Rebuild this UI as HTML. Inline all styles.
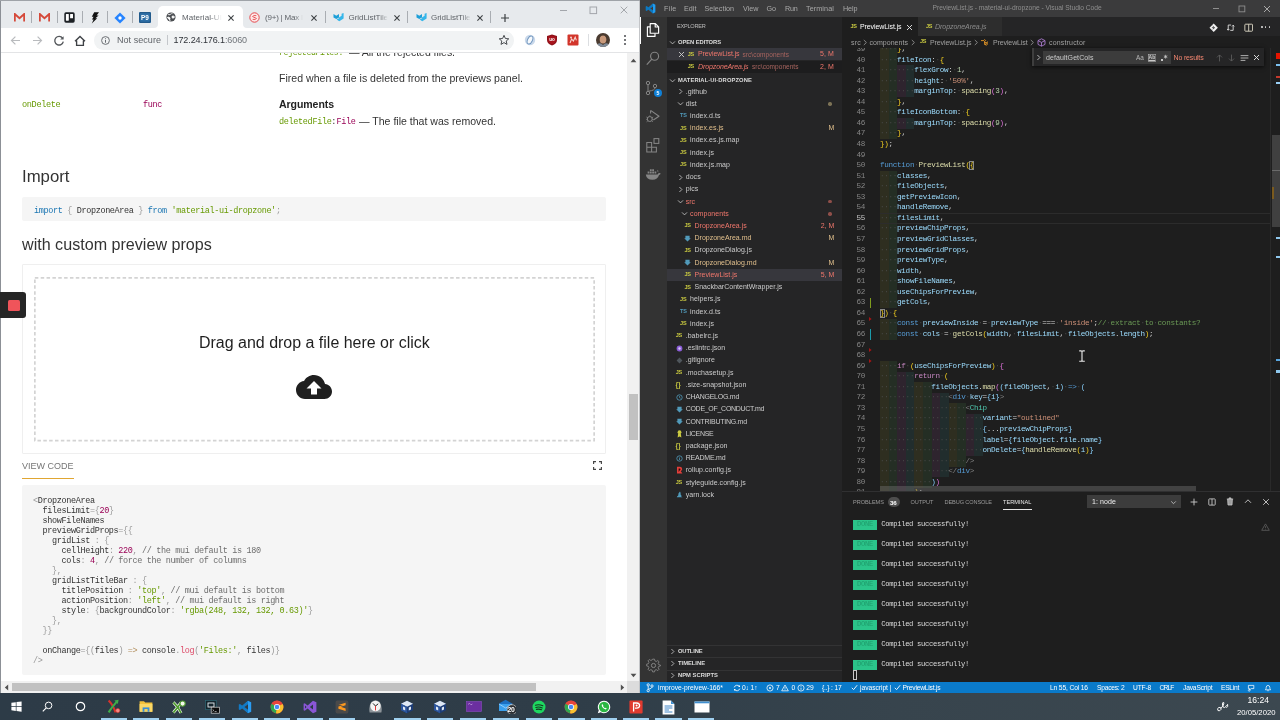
<!DOCTYPE html>
<html lang="en"><head><meta charset="utf-8"><title>screen</title>
<style>html,body{margin:0;padding:0;background:#1e1e1e;}
#r{will-change:transform;position:relative;width:1280px;height:720px;overflow:hidden;font-family:"Liberation Sans",sans-serif;}
#r div,#r svg{position:absolute;}
#r .t{white-space:pre;font-family:"Liberation Sans",sans-serif;}
#r .m{font-family:"Liberation Mono",monospace;}
#r .t span{position:static;}
</style></head>
<body><div id="r">
<div style="left:0px;top:0px;width:640px;height:693px;background:#ffffff;"></div>
<div style="left:0px;top:0px;width:640px;height:28px;background:#e7eaed;"></div>
<div style="left:0px;top:0px;width:640px;height:1px;background:#9fa3a8;"></div>
<svg style="position:absolute;left:13.5px;top:13px;" width="11" height="9" viewBox="0 0 11 9"><path d="M0.8 8.6V1 L5.5 5.2 L10.2 1V8.6" fill="none" stroke="#d5493a" stroke-width="1.9" stroke-linejoin="miter"/></svg>
<svg style="position:absolute;left:38.5px;top:13px;" width="11" height="9" viewBox="0 0 11 9"><path d="M0.8 8.6V1 L5.5 5.2 L10.2 1V8.6" fill="none" stroke="#d5493a" stroke-width="1.9" stroke-linejoin="miter"/></svg>
<div style="left:31px;top:11px;width:1px;height:12px;background:#a9adb2;"></div>
<div style="left:56.5px;top:11px;width:1px;height:12px;background:#a9adb2;"></div>
<div style="left:82px;top:11px;width:1px;height:12px;background:#a9adb2;"></div>
<div style="left:107px;top:11px;width:1px;height:12px;background:#a9adb2;"></div>
<div style="left:132px;top:11px;width:1px;height:12px;background:#a9adb2;"></div>
<svg style="position:absolute;left:64px;top:12px;" width="11" height="11" viewBox="0 0 11 11"><rect x="0.3" y="0.3" width="10.4" height="10.4" rx="1.6" fill="#1d2125"/><rect x="1.9" y="1.9" width="2.9" height="6.8" rx=".4" fill="#fff"/><rect x="6.1" y="1.9" width="2.9" height="4.4" rx=".4" fill="#fff"/></svg>
<svg style="position:absolute;left:90px;top:11.5px;" width="10" height="12" viewBox="0 0 10 12"><path d="M4.2 0.3 L9 0.3 L6.6 3.6 L8.6 3.6 L5.4 6.2 L7.2 6.2 L1.8 11.6 L3.6 7.6 L2 7.6 L3.6 4.8 L1.8 4.8 Z" fill="#111"/></svg>
<svg style="position:absolute;left:113.5px;top:11.5px;" width="12" height="12" viewBox="0 0 12 12"><path d="M6 0.4 L11.6 6 L6 11.6 L0.4 6Z" fill="#2684ff"/><circle cx="6" cy="6" r="1.7" fill="#fff"/></svg>
<svg style="position:absolute;left:139px;top:12px;" width="12" height="11" viewBox="0 0 12 11"><rect x="0" y="0" width="12" height="11" rx="1" fill="#2f6fa6"/><rect x="0.7" y="0.7" width="10.6" height="9.6" rx=".6" fill="none" stroke="#1d4f7c" stroke-width=".8"/></svg>
<div class="t" style="left:141px;top:12.60px;line-height:10px;height:10px;font-size:6.40px;font-weight:bold;color:#fff;">P9</div>
<div style="left:158px;top:6px;width:85px;height:22px;background:#ffffff;border-radius:5px 5px 0 0;"></div>
<svg style="position:absolute;left:154px;top:24px;" width="4" height="4" viewBox="0 0 4 4"><path d="M4 0 V4 H0 A4 4 0 0 0 4 0Z" fill="#fff"/></svg>
<svg style="position:absolute;left:243px;top:24px;" width="4" height="4" viewBox="0 0 4 4"><path d="M0 0 V4 H4 A4 4 0 0 1 0 0Z" fill="#fff"/></svg>
<svg style="position:absolute;left:165.5px;top:12px;" width="10" height="10" viewBox="0 0 10 10"><circle cx="5" cy="5" r="4.6" fill="#4a4d51"/><path d="M2 2.6 Q3.5 3.2 4.6 2.2 Q5.4 1.4 6.6 1.6 M1 5.6 Q2.4 4.6 3.8 5.6 Q4.4 6.6 3.8 7.6 L4.2 9 M6.2 4 Q7.6 3.6 8.6 4.8 Q8 6.4 6.6 6.2 Q5.6 5.4 6.2 4Z" fill="#fff" stroke="#fff" stroke-width=".7"/></svg>
<div class="t" style="left:182px;top:11.50px;line-height:12px;height:12px;font-size:8.00px;letter-spacing:0.080px;color:#5f6368;-webkit-mask-image:linear-gradient(90deg,#000 70%,transparent);mask-image:linear-gradient(90deg,#000 70%,transparent);">Material-UI</div>
<svg style="position:absolute;left:227px;top:13.5px;" width="8" height="8" viewBox="0 0 8 8"><path d="M1.4 1.4L6.6 6.6M6.6 1.4L1.4 6.6" stroke="#3c4043" stroke-width="1.1" fill="none"/></svg>
<svg style="position:absolute;left:249px;top:12px;" width="11" height="11" viewBox="0 0 11 11"><circle cx="5.5" cy="5.5" r="4.7" fill="#fde8e8" stroke="#e5484d" stroke-width="1"/><path d="M7.3 3.6 H4.6 L3.6 4.6 L7.4 6.4 L6.4 7.4 H3.7" fill="none" stroke="#e5484d" stroke-width=".9"/></svg>
<div class="t" style="left:265px;top:11.50px;line-height:12px;height:12px;font-size:8.00px;letter-spacing:-0.211px;color:#5f6368;-webkit-mask-image:linear-gradient(90deg,#000 78%,transparent);mask-image:linear-gradient(90deg,#000 78%,transparent);">(9+) | Max I</div>
<svg style="position:absolute;left:310px;top:13.5px;" width="8" height="8" viewBox="0 0 8 8"><path d="M1.4 1.4L6.6 6.6M6.6 1.4L1.4 6.6" stroke="#3c4043" stroke-width="1.1" fill="none"/></svg>
<div style="left:325px;top:11px;width:1px;height:12px;background:#a9adb2;"></div>
<svg style="position:absolute;left:333px;top:13px;" width="11" height="9" viewBox="0 0 11 9"><path d="M0.5 1 L3.3 2.7 L6 1 V4.4 L3.3 6 L0.5 4.4Z" fill="#1e9fd8"/><path d="M6 4.4 L8.6 2.8 V0.8 L10.6 0 V5.6 L6.3 8.2 L3.6 6.6 L6 5.2Z" fill="#35b6ea"/></svg>
<div class="t" style="left:348.5px;top:11.50px;line-height:12px;height:12px;font-size:8.00px;letter-spacing:-0.055px;color:#5f6368;-webkit-mask-image:linear-gradient(90deg,#000 78%,transparent);mask-image:linear-gradient(90deg,#000 78%,transparent);">GridListTile</div>
<svg style="position:absolute;left:393px;top:13.5px;" width="8" height="8" viewBox="0 0 8 8"><path d="M1.4 1.4L6.6 6.6M6.6 1.4L1.4 6.6" stroke="#3c4043" stroke-width="1.1" fill="none"/></svg>
<div style="left:407px;top:11px;width:1px;height:12px;background:#a9adb2;"></div>
<svg style="position:absolute;left:416px;top:13px;" width="11" height="9" viewBox="0 0 11 9"><path d="M0.5 1 L3.3 2.7 L6 1 V4.4 L3.3 6 L0.5 4.4Z" fill="#1e9fd8"/><path d="M6 4.4 L8.6 2.8 V0.8 L10.6 0 V5.6 L6.3 8.2 L3.6 6.6 L6 5.2Z" fill="#35b6ea"/></svg>
<div class="t" style="left:431px;top:11.50px;line-height:12px;height:12px;font-size:8.00px;letter-spacing:-0.055px;color:#5f6368;-webkit-mask-image:linear-gradient(90deg,#000 78%,transparent);mask-image:linear-gradient(90deg,#000 78%,transparent);">GridListTile</div>
<svg style="position:absolute;left:476px;top:13.5px;" width="8" height="8" viewBox="0 0 8 8"><path d="M1.4 1.4L6.6 6.6M6.6 1.4L1.4 6.6" stroke="#3c4043" stroke-width="1.1" fill="none"/></svg>
<div style="left:490px;top:11px;width:1px;height:12px;background:#a9adb2;"></div>
<svg style="position:absolute;left:500px;top:12.5px;" width="10" height="10" viewBox="0 0 10 10"><path d="M5 1V9M1 5H9" stroke="#3c4043" stroke-width="1.2"/></svg>
<div style="left:559.5px;top:10px;width:7px;height:1px;background:#a3a6ab;"></div>
<svg style="position:absolute;left:589px;top:6px;" width="9" height="9" viewBox="0 0 9 9"><rect x="1" y="1" width="6.6" height="6.6" fill="none" stroke="#a3a6ab" stroke-width="1"/></svg>
<svg style="position:absolute;left:620px;top:6px;" width="8" height="8" viewBox="0 0 8 8"><path d="M0.7000000000000002 0.7000000000000002L7.3 7.3M7.3 0.7000000000000002L0.7000000000000002 7.3" stroke="#a3a6ab" stroke-width="1" fill="none"/></svg>
<div style="left:0px;top:28px;width:640px;height:24.5px;background:#ffffff;"></div>
<div style="left:0px;top:52px;width:640px;height:1px;background:#e3e4e6;"></div>
<svg style="position:absolute;left:10px;top:35px;" width="11" height="11" viewBox="0 0 11 11"><path d="M10 5.5H1.6M5.4 1.6L1.5 5.5L5.4 9.4" fill="none" stroke="#b9bbbe" stroke-width="1.2"/></svg>
<svg style="position:absolute;left:31.5px;top:35px;" width="11" height="11" viewBox="0 0 11 11"><path d="M1 5.5H9.4M5.6 1.6L9.5 5.5L5.6 9.4" fill="none" stroke="#b9bbbe" stroke-width="1.2"/></svg>
<svg style="position:absolute;left:52.5px;top:34.5px;" width="12" height="12" viewBox="0 0 12 12"><path d="M9.6 3.2 A4.3 4.3 0 1 0 10.3 6.6" fill="none" stroke="#55585c" stroke-width="1.35"/><path d="M10.6 1.2V4.6H7.2Z" fill="#55585c"/></svg>
<svg style="position:absolute;left:73.5px;top:34.5px;" width="12" height="12" viewBox="0 0 12 12"><path d="M1 6.2 L6 1.4 L11 6.2 M2.6 5.4V10.4H9.4V5.4" fill="none" stroke="#3f4246" stroke-width="1.35"/></svg>
<div style="left:94px;top:31px;width:420px;height:18.6px;background:#f1f3f4;border-radius:9.3px;"></div>
<svg style="position:absolute;left:100.5px;top:35.5px;" width="9" height="9" viewBox="0 0 9 9"><circle cx="4.5" cy="4.5" r="3.9" fill="none" stroke="#5f6368" stroke-width=".9"/><path d="M4.5 4V6.7M4.5 2.3V3.2" stroke="#5f6368" stroke-width=".95"/></svg>
<div class="t" style="left:117px;top:33.50px;line-height:13px;height:13px;font-size:9.00px;letter-spacing:0.048px;color:#5f6368;">Not secure</div>
<div style="left:167px;top:35px;width:1px;height:10px;background:#c4c7cb;"></div>
<div class="t" style="left:173.5px;top:33.50px;line-height:13px;height:13px;font-size:9.00px;letter-spacing:-0.093px;color:#30343a;">172.24.176.1<span style="color:#70757a">:6060</span></div>
<svg style="position:absolute;left:498px;top:34px;" width="12" height="12" viewBox="0 0 12 12"><path d="M6 1.3 L7.4 4.5 L10.8 4.8 L8.2 7 L9 10.4 L6 8.6 L3 10.4 L3.8 7 L1.2 4.8 L4.6 4.5Z" fill="none" stroke="#4a4d51" stroke-width="1"/></svg>
<svg style="position:absolute;left:524px;top:34px;" width="12" height="12" viewBox="0 0 12 12"><circle cx="6" cy="6" r="5.2" fill="#c9d8ea"/><ellipse cx="6" cy="6" rx="2.4" ry="4.2" transform="rotate(25 6 6)" fill="#f6f9fc" stroke="#6d93bd" stroke-width=".9"/></svg>
<svg style="position:absolute;left:546px;top:34px;" width="12" height="12" viewBox="0 0 12 12"><path d="M6 0.6 L11 2 V6 Q11 9.6 6 11.5 Q1 9.6 1 6 V2Z" fill="#8e1219"/><path d="M6 1.8 L10 2.9 V6 Q10 8.7 6 10.3 Q2 8.7 2 6 V2.9Z" fill="#a8141d"/></svg>
<div class="t" style="left:549.3px;top:36.20px;line-height:8px;height:8px;font-size:4.60px;font-weight:bold;color:#fff;">uo</div>
<svg style="position:absolute;left:567px;top:34px;" width="12" height="12" viewBox="0 0 12 12"><rect x="0.5" y="0.5" width="11" height="11" rx="1" fill="#d2352b"/><path d="M3 9 L4.6 5 L6.4 7 L8.2 3.2 L9.4 6.4" fill="none" stroke="#f6d4cf" stroke-width="1.1"/><circle cx="4" cy="3.4" r="1" fill="#f6d4cf"/></svg>
<div style="left:588px;top:34px;width:1px;height:12px;background:#dcdee1;"></div>
<div style="left:596px;top:33px;width:14px;height:14px;border-radius:50%;overflow:hidden;"><svg style="left:0;top:0" width="14" height="14" viewBox="0 0 14 14"><rect width="14" height="14" fill="#4a3b30"/><ellipse cx="7" cy="6.4" rx="3.3" ry="4" fill="#c99a7c"/><path d="M3 4.6 Q7 0.4 11 4.6 Q9.6 2.4 7 2.6 Q4.4 2.4 3 4.6Z" fill="#2a1e17"/><path d="M0 14 Q1 9.6 5 10.4 L7 12 L9 10.4 Q13 9.6 14 14Z" fill="#7f8b99"/></svg></div>
<div style="left:624.2px;top:35.4px;width:1.9px;height:1.9px;background:#4a4d51;border-radius:50%;"></div>
<div style="left:624.2px;top:39.1px;width:1.9px;height:1.9px;background:#4a4d51;border-radius:50%;"></div>
<div style="left:624.2px;top:42.8px;width:1.9px;height:1.9px;background:#4a4d51;border-radius:50%;"></div>
<div style="left:0px;top:1px;width:1px;height:692px;background:#8c9096;"></div>
<div style="left:0;top:53px;width:625px;height:20px;overflow:hidden"><div class="t m" style="left:279px;top:-6.00px;line-height:12px;height:12px;font-size:8.16px;color:#690;letter-spacing:-0.327px;">rejectedFiles:</div><div class="t" style="left:349px;top:-7.90px;line-height:15px;height:15px;font-size:10.55px;letter-spacing:-0.052px;color:#333;">— All the rejected files.</div></div>
<div class="t" style="left:279px;top:70.50px;line-height:15px;height:15px;font-size:10.55px;letter-spacing:0.012px;color:#333;">Fired when a file is deleted from the previews panel.</div>
<div class="t m" style="left:22px;top:98.50px;line-height:12px;height:12px;font-size:8.59px;color:#690;letter-spacing:-0.345px;">onDelete</div>
<div class="t m" style="left:143px;top:98.50px;line-height:12px;height:12px;font-size:8.48px;color:#905;letter-spacing:-0.340px;">func</div>
<div class="t" style="left:279px;top:96.50px;line-height:15px;height:15px;font-size:10.55px;font-weight:bold;letter-spacing:-0.076px;color:#222;">Arguments</div>
<div class="t m" style="left:279px;top:115.50px;line-height:12px;height:12px;font-size:8.52px;color:#690;letter-spacing:-0.342px;">deletedFile</div>
<div class="t m" style="left:331.3px;top:115.50px;line-height:12px;height:12px;font-size:8.52px;color:#333;letter-spacing:-0.342px;">:</div>
<div class="t m" style="left:336.5px;top:115.50px;line-height:12px;height:12px;font-size:8.48px;color:#905;letter-spacing:-0.340px;">File</div>
<div class="t" style="left:359px;top:113.50px;line-height:15px;height:15px;font-size:10.55px;color:#333;">— The file that was removed.</div>
<div class="t" style="left:22px;top:166.00px;line-height:22px;height:22px;font-size:16.76px;color:#333;">Import</div>
<div style="left:22px;top:197px;width:584px;height:24px;background:#f5f5f5;border-radius:2px;"></div>
<div class="t m" style="left:34px;top:204.50px;line-height:12px;height:12px;font-size:8.48px;color:#333;letter-spacing:-0.340px;"><span style="color:#1673b1">import</span><span style="color:#999"> {</span><span style="color:#333"> DropzoneArea </span><span style="color:#999">}</span><span style="color:#1673b1"> from</span><span style="color:#690"> 'material-ui-dropzone'</span><span style="color:#999">;</span></div>
<div class="t" style="left:22px;top:233.50px;line-height:21px;height:21px;font-size:16.13px;color:#333;">with custom preview props</div>
<div style="left:22px;top:264px;width:584px;height:189.5px;border:1px solid #efefef;border-radius:1px;box-sizing:border-box;"></div>
<svg style="position:absolute;left:33px;top:276px;" width="563" height="166.5" viewBox="0 0 563 166.5"><rect x="1.85" y="1.85" width="559.3" height="162.8" fill="none" stroke="#d3d3d3" stroke-width="1.7" stroke-dasharray="3.5 2.35"/></svg>
<div class="t" style="left:199px;top:331.50px;line-height:21px;height:21px;font-size:15.98px;color:#1f1f1f;">Drag and drop a file here or click</div>
<svg style="position:absolute;left:296px;top:369px;" width="36" height="36" viewBox="0 0 24 24"><path d="M19.35 10.04C18.67 6.59 15.64 4 12 4 9.11 4 6.6 5.64 5.35 8.04 2.34 8.36 0 10.91 0 14c0 3.31 2.69 6 6 6h13c2.76 0 5-2.24 5-5 0-2.64-2.05-4.78-4.65-4.96zM14 13v4h-4v-4H7l5-5 5 5h-3z" fill="#1f1f1f"/></svg>
<div style="left:0px;top:292px;width:26px;height:26px;background:#262626;border-radius:0 3px 3px 0;"></div>
<div style="left:8px;top:299.5px;width:11.5px;height:11.5px;background:#f0545a;border-radius:1.5px;"></div>
<div class="t" style="left:22px;top:459.50px;line-height:13px;height:13px;font-size:9.00px;color:#767676;">VIEW CODE</div>
<div style="left:22px;top:477.6px;width:51.5px;height:1.6px;background:#e0a632;"></div>
<svg style="position:absolute;left:592.5px;top:460.5px;" width="9" height="9" viewBox="0 0 9 9"><path d="M0.6 3V0.6H3M6 0.6H8.4V3M8.4 6V8.4H6M3 8.4H0.6V6" fill="none" stroke="#444" stroke-width="1.15"/></svg>
<div style="left:22px;top:485px;width:584px;height:190px;background:#f5f5f5;border-radius:2px;"></div>
<div class="t m" style="left:33px;top:495.20px;line-height:12px;height:12px;font-size:8.48px;color:#333;letter-spacing:-0.340px;"><span style="color:#999">&lt;</span><span style="color:#333">DropzoneArea</span></div>
<div class="t m" style="left:33px;top:505.20px;line-height:12px;height:12px;font-size:8.48px;color:#333;letter-spacing:-0.340px;"><span style="color:#333">  filesLimit</span><span style="color:#999">={</span><span style="color:#905">20</span><span style="color:#999">}</span></div>
<div class="t m" style="left:33px;top:515.20px;line-height:12px;height:12px;font-size:8.48px;color:#333;letter-spacing:-0.340px;"><span style="color:#333">  showFileNames</span></div>
<div class="t m" style="left:33px;top:525.20px;line-height:12px;height:12px;font-size:8.48px;color:#333;letter-spacing:-0.340px;"><span style="color:#333">  previewGridProps</span><span style="color:#999">={{</span></div>
<div class="t m" style="left:33px;top:535.20px;line-height:12px;height:12px;font-size:8.48px;color:#333;letter-spacing:-0.340px;"><span style="color:#333">    gridList </span><span style="color:#999">: {</span></div>
<div class="t m" style="left:33px;top:545.20px;line-height:12px;height:12px;font-size:8.48px;color:#333;letter-spacing:-0.340px;"><span style="color:#333">      cellHeight</span><span style="color:#999">:</span><span style="color:#905"> 220</span><span style="color:#999">,</span><span style="color:#6d6d6d"> // the mui default is 180</span></div>
<div class="t m" style="left:33px;top:555.20px;line-height:12px;height:12px;font-size:8.48px;color:#333;letter-spacing:-0.340px;"><span style="color:#333">      cols</span><span style="color:#999">:</span><span style="color:#905"> 4</span><span style="color:#999">,</span><span style="color:#6d6d6d"> // force the number of columns</span></div>
<div class="t m" style="left:33px;top:565.20px;line-height:12px;height:12px;font-size:8.48px;color:#333;letter-spacing:-0.340px;"><span style="color:#999">    },</span></div>
<div class="t m" style="left:33px;top:575.20px;line-height:12px;height:12px;font-size:8.48px;color:#333;letter-spacing:-0.340px;"><span style="color:#333">    gridListTitleBar </span><span style="color:#999">: {</span></div>
<div class="t m" style="left:33px;top:585.20px;line-height:12px;height:12px;font-size:8.48px;color:#333;letter-spacing:-0.340px;"><span style="color:#333">      titlePosition </span><span style="color:#999">:</span><span style="color:#690"> 'top'</span><span style="color:#999">,</span><span style="color:#6d6d6d"> // mui default is bottom</span></div>
<div class="t m" style="left:33px;top:595.20px;line-height:12px;height:12px;font-size:8.48px;color:#333;letter-spacing:-0.340px;"><span style="color:#333">      actionPosition</span><span style="color:#999">:</span><span style="color:#690"> 'left'</span><span style="color:#999">,</span><span style="color:#6d6d6d"> // mui default is right</span></div>
<div class="t m" style="left:33px;top:605.20px;line-height:12px;height:12px;font-size:8.48px;color:#333;letter-spacing:-0.340px;"><span style="color:#333">      style</span><span style="color:#999">: {</span><span style="color:#333">backgroundColor</span><span style="color:#999">:</span><span style="color:#690"> 'rgba(248, 132, 132, 0.63)'</span><span style="color:#999">}</span></div>
<div class="t m" style="left:33px;top:615.20px;line-height:12px;height:12px;font-size:8.48px;color:#333;letter-spacing:-0.340px;"><span style="color:#999">    },</span></div>
<div class="t m" style="left:33px;top:625.20px;line-height:12px;height:12px;font-size:8.48px;color:#333;letter-spacing:-0.340px;"><span style="color:#999">  }}</span></div>
<div class="t m" style="left:33px;top:645.20px;line-height:12px;height:12px;font-size:8.48px;color:#333;letter-spacing:-0.340px;"><span style="color:#333">  onChange</span><span style="color:#999">={(</span><span style="color:#333">files</span><span style="color:#999">)</span><span style="color:#b3905f"> =&gt;</span><span style="color:#333"> console</span><span style="color:#999">.</span><span style="color:#dd4a68">log</span><span style="color:#999">(</span><span style="color:#690">'Files:'</span><span style="color:#999">,</span><span style="color:#333"> files</span><span style="color:#999">)}</span></div>
<div class="t m" style="left:33px;top:655.20px;line-height:12px;height:12px;font-size:8.48px;color:#333;letter-spacing:-0.340px;"><span style="color:#999">/&gt;</span></div>
<div style="left:627px;top:53px;width:11.5px;height:628.3px;background:#f1f1f1;"></div>
<div style="left:638.6px;top:1px;width:1.4px;height:692px;background:#c3c5c8;"></div>
<div style="left:628.8px;top:394px;width:9px;height:46px;background:#c1c1c1;"></div>
<svg style="position:absolute;left:629.5px;top:58px;" width="7" height="5" viewBox="0 0 7 5"><path d="M3.5 0.8L6.4 4.2H0.6Z" fill="#505050"/></svg>
<svg style="position:absolute;left:629.5px;top:673px;" width="7" height="5" viewBox="0 0 7 5"><path d="M3.5 4.2L6.4 0.8H0.6Z" fill="#505050"/></svg>
<div style="left:1px;top:681.3px;width:626px;height:11.7px;background:#f1f1f1;"></div>
<div style="left:627px;top:681.3px;width:11.5px;height:11.7px;background:#dcdcdc;"></div>
<div style="left:12px;top:683px;width:524px;height:8.4px;background:#c1c1c1;"></div>
<svg style="position:absolute;left:3.5px;top:683.7px;" width="5" height="7" viewBox="0 0 5 7"><path d="M0.8 3.5L4.2 0.6V6.4Z" fill="#505050"/></svg>
<svg style="position:absolute;left:619.5px;top:683.7px;" width="5" height="7" viewBox="0 0 5 7"><path d="M4.2 3.5L0.8 0.6V6.4Z" fill="#505050"/></svg>
<div style="left:640px;top:0px;width:640px;height:16.6px;background:#3b3b3c;"></div>
<svg style="position:absolute;left:644.5px;top:3px;" width="11" height="11" viewBox="0 0 11 11"><path d="M8 0.6L10.4 1.7V9.3L8 10.4L2.6 5.5Z" fill="#1f9cf0"/><path d="M8 0.6L3.6 4.6L1.7 3.1L0.7 3.6V7.4L1.7 7.9L3.6 6.4L8 10.4V7.4L5.4 5.5L8 3.6Z" fill="#0b78c2"/><path d="M8 3.4V7.6L5.2 5.5Z" fill="#3b3b3c"/></svg>
<div class="t" style="left:664px;top:3.10px;line-height:11px;height:11px;font-size:7.20px;letter-spacing:0.224px;color:#a9a9a9;">File</div>
<div class="t" style="left:684px;top:3.10px;line-height:11px;height:11px;font-size:7.20px;letter-spacing:0.023px;color:#a9a9a9;">Edit</div>
<div class="t" style="left:704.5px;top:3.10px;line-height:11px;height:11px;font-size:7.20px;letter-spacing:-0.013px;color:#a9a9a9;">Selection</div>
<div class="t" style="left:743px;top:3.10px;line-height:11px;height:11px;font-size:7.20px;letter-spacing:0.006px;color:#a9a9a9;">View</div>
<div class="t" style="left:766.5px;top:3.10px;line-height:11px;height:11px;font-size:7.20px;letter-spacing:-0.052px;color:#a9a9a9;">Go</div>
<div class="t" style="left:785px;top:3.10px;line-height:11px;height:11px;font-size:7.20px;letter-spacing:-0.236px;color:#a9a9a9;">Run</div>
<div class="t" style="left:806px;top:3.10px;line-height:11px;height:11px;font-size:7.20px;letter-spacing:0.099px;color:#a9a9a9;">Terminal</div>
<div class="t" style="left:843px;top:3.10px;line-height:11px;height:11px;font-size:7.20px;letter-spacing:-0.077px;color:#a9a9a9;">Help</div>
<div class="t" style="left:932.5px;top:3.40px;line-height:10px;height:10px;font-size:6.70px;letter-spacing:-0.029px;color:#8f8f8f;">PreviewList.js - material-ui-dropzone - Visual Studio Code</div>
<div style="left:1212.5px;top:8.2px;width:6.5px;height:0.9px;background:#8e8e8e;"></div>
<svg style="position:absolute;left:1237.5px;top:4.5px;" width="8" height="8" viewBox="0 0 8 8"><rect x="1" y="1" width="5.8" height="5.8" fill="none" stroke="#8e8e8e" stroke-width=".9"/></svg>
<svg style="position:absolute;left:1263px;top:4.5px;" width="8" height="8" viewBox="0 0 8 8"><path d="M1 1L7 7M7 1L1 7" stroke="#b4b4b4" stroke-width=".9"/></svg>
<div style="left:640px;top:16.5px;width:27px;height:666px;background:#333333;"></div>
<div style="left:640px;top:17px;width:1.4px;height:26.5px;background:#ffffff;"></div>
<svg style="position:absolute;left:645px;top:22px;" width="16" height="16" viewBox="0 0 16 16"><path d="M5.2 1.6H10.4L13.6 4.8V11.2H5.2Z M10.2 1.6V5H13.6" fill="none" stroke="#fff" stroke-width="1.15" stroke-linejoin="round"/><path d="M5.2 4.8H2.4V14.4H10V11.4" fill="none" stroke="#fff" stroke-width="1.15" stroke-linejoin="round"/></svg>
<svg style="position:absolute;left:645px;top:50px;" width="16" height="16" viewBox="0 0 16 16"><circle cx="9.6" cy="6.2" r="4" fill="none" stroke="#858585" stroke-width="1.15"/><path d="M6.8 9.2L1.8 14.6" stroke="#858585" stroke-width="1.25"/></svg>
<svg style="position:absolute;left:644px;top:80px;" width="16" height="17" viewBox="0 0 16 17"><circle cx="4" cy="3" r="1.7" fill="none" stroke="#858585" stroke-width="1"/><circle cx="4" cy="13" r="1.7" fill="none" stroke="#858585" stroke-width="1"/><circle cx="11" cy="6" r="1.7" fill="none" stroke="#858585" stroke-width="1"/><path d="M4 4.8V11.2M11 7.8Q11 10.4 4.6 11.2" fill="none" stroke="#858585" stroke-width="1"/></svg>
<div style="left:653.8px;top:88.6px;width:8.4px;height:8.4px;background:#0f80d7;border-radius:50%;"></div>
<div class="t" style="left:656.6px;top:88.90px;line-height:8px;height:8px;font-size:5.20px;font-weight:bold;color:#fff;">5</div>
<svg style="position:absolute;left:645px;top:108px;" width="16" height="16" viewBox="0 0 16 16"><path d="M5.6 2.4V5.6M5.6 2.4L14 8.2L8.4 12" fill="none" stroke="#858585" stroke-width="1.1" stroke-linejoin="round"/><circle cx="4.8" cy="11" r="2.5" fill="none" stroke="#858585" stroke-width="1"/><path d="M1.4 9L3 10M1.2 11.4H2.4M1.6 13.8L3 12.6M8.2 9L6.6 10M8.4 11.4H7.2M8 13.8L6.6 12.6M4.8 8.4V7.4" stroke="#858585" stroke-width=".8"/></svg>
<svg style="position:absolute;left:645px;top:137px;" width="16" height="16" viewBox="0 0 16 16"><path d="M1.8 5.4H6.6V10.2H11.4V15H1.8ZM6.6 10.2H1.8M6.6 10.2V15" fill="none" stroke="#858585" stroke-width="1.05"/><rect x="9" y="1.6" width="4.8" height="4.8" fill="none" stroke="#858585" stroke-width="1.05"/></svg>
<svg style="position:absolute;left:644.5px;top:168px;" width="17" height="13" viewBox="0 0 17 13"><path d="M0.8 6.4H12.6Q13.4 4.6 15.6 5.2Q15.4 6.6 14 7Q12.8 11.6 7.4 11.8Q1.6 11.8 0.8 6.4Z" fill="#858585"/><path d="M2.6 3.6H4.4V5.4H2.6ZM4.9 3.6H6.7V5.4H4.9ZM7.2 3.6H9V5.4H7.2ZM4.9 1.3H6.7V3.1H4.9ZM7.2 1.3H9V3.1H7.2ZM9.5 3.6H11.3V5.4H9.5ZM12.4 1.8Q13.8 2.6 13.2 4.4Q12 3.6 12.4 1.8Z" fill="#858585"/></svg>
<svg style="position:absolute;left:645.5px;top:657.5px;" width="15" height="15" viewBox="0 0 15 15"><circle cx="7.5" cy="7.5" r="2.1" fill="none" stroke="#858585" stroke-width="1"/><path d="M6.5 1.2H8.5L8.9 3L10.4 3.7L12 2.7L13.4 4.1L12.4 5.7L13 7.1L14.8 7.5L14.8 8.5L13 8.9L12.4 10.4L13.4 12L12 13.4L10.4 12.4L8.9 13L8.5 14.8H6.5L6.1 13L4.6 12.4L3 13.4L1.6 12L2.6 10.4L2 8.9L0.2 8.5V6.5L2 6.1L2.6 4.6L1.6 3L3 1.6L4.6 2.6L6.1 2Z" fill="none" stroke="#858585" stroke-width=".95" stroke-linejoin="round" transform="translate(0.5 0) scale(0.94)"/></svg>
<div style="left:667px;top:16.5px;width:175px;height:666px;background:#252526;"></div>
<div class="t" style="left:677px;top:21.50px;line-height:9px;height:9px;font-size:5.60px;letter-spacing:-0.250px;color:#bbbbbb;">EXPLORER</div>
<svg style="position:absolute;left:668.5px;top:39px;" width="7" height="7" viewBox="0 0 7 7"><path d="M1 2.4L3.5 4.9L6 2.4" fill="none" stroke="#c5c5c5" stroke-width=".85"/></svg>
<div class="t" style="left:678px;top:38.00px;line-height:9px;height:9px;font-size:5.80px;font-weight:bold;letter-spacing:-0.060px;color:#dddddd;">OPEN EDITORS</div>
<div style="left:667px;top:48.3px;width:175px;height:12.2px;background:#37373d;"></div>
<svg style="position:absolute;left:677.5px;top:51px;" width="7" height="7" viewBox="0 0 7 7"><path d="M1 1L6 6M6 1L1 6" stroke="#d0d0d0" stroke-width=".9"/></svg>
<div class="t" style="left:687.7px;top:49.80px;line-height:9px;height:9px;font-size:5.50px;font-weight:bold;color:#cbcb41;letter-spacing:-0.2px;">JS</div>
<div class="t" style="left:698px;top:49.40px;line-height:10px;height:10px;font-size:7.00px;letter-spacing:-0.092px;color:#f0776c;">PreviewList.js</div>
<div class="t" style="left:742.5px;top:49.60px;line-height:10px;height:10px;font-size:6.50px;letter-spacing:0.044px;color:#a9655f;">src\components</div>
<div class="t" style="left:820px;top:49.40px;line-height:10px;height:10px;font-size:7.00px;letter-spacing:0.097px;color:#f0776c;">5, M</div>
<div style="left:667px;top:60.9px;width:175px;height:11.8px;background:#1d1d1e;"></div>
<div class="t" style="left:687.7px;top:62.20px;line-height:9px;height:9px;font-size:5.50px;font-weight:bold;color:#cbcb41;letter-spacing:-0.2px;">JS</div>
<div class="t" style="left:698px;top:61.80px;line-height:10px;height:10px;font-size:7.00px;font-style:italic;letter-spacing:-0.109px;color:#f0776c;">DropzoneArea.js</div>
<div class="t" style="left:752px;top:62.00px;line-height:10px;height:10px;font-size:6.50px;letter-spacing:0.044px;color:#a9655f;">src\components</div>
<div class="t" style="left:820px;top:61.80px;line-height:10px;height:10px;font-size:7.00px;letter-spacing:0.097px;color:#f0776c;">2, M</div>
<svg style="position:absolute;left:668.5px;top:76.5px;" width="7" height="7" viewBox="0 0 7 7"><path d="M1 2.4L3.5 4.9L6 2.4" fill="none" stroke="#c5c5c5" stroke-width=".85"/></svg>
<div class="t" style="left:678px;top:75.50px;line-height:9px;height:9px;font-size:5.80px;font-weight:bold;letter-spacing:0.097px;color:#dddddd;">MATERIAL-UI-DROPZONE</div>
<svg style="position:absolute;left:676.5px;top:88.1px;" width="7" height="7" viewBox="0 0 7 7"><path d="M2.4 1L4.9 3.5L2.4 6" fill="none" stroke="#c5c5c5" stroke-width=".85"/></svg>
<div class="t" style="left:685.7px;top:86.60px;line-height:10px;height:10px;font-size:7.00px;letter-spacing:0.043px;color:#cccccc;">.github</div>
<svg style="position:absolute;left:676.5px;top:100.322px;" width="7" height="7" viewBox="0 0 7 7"><path d="M1 2.4L3.5 4.9L6 2.4" fill="none" stroke="#c5c5c5" stroke-width=".85"/></svg>
<div class="t" style="left:685.7px;top:98.82px;line-height:10px;height:10px;font-size:7.00px;letter-spacing:0.039px;color:#cccccc;">dist</div>
<div style="left:828.4px;top:102.122px;width:3.4px;height:3.4px;background:#7d7356;border-radius:50%;"></div>
<div class="t" style="left:680.1px;top:111.44px;line-height:9px;height:9px;font-size:5.50px;font-weight:bold;color:#519aba;letter-spacing:-0.2px;">TS</div>
<div class="t" style="left:690.1px;top:111.04px;line-height:10px;height:10px;font-size:7.00px;letter-spacing:0.043px;color:#cccccc;">index.d.ts</div>
<div class="t" style="left:680.1px;top:123.67px;line-height:9px;height:9px;font-size:5.50px;font-weight:bold;color:#cbcb41;letter-spacing:-0.2px;">JS</div>
<div class="t" style="left:690.1px;top:123.27px;line-height:10px;height:10px;font-size:7.00px;letter-spacing:0.043px;color:#e2c08d;">index.es.js</div>
<div class="t" style="left:828.469px;top:123.27px;line-height:10px;height:10px;font-size:7.00px;color:#e2c08d;">M</div>
<div class="t" style="left:680.1px;top:135.89px;line-height:9px;height:9px;font-size:5.50px;font-weight:bold;color:#cbcb41;letter-spacing:-0.2px;">JS</div>
<div class="t" style="left:690.1px;top:135.49px;line-height:10px;height:10px;font-size:7.00px;letter-spacing:0.046px;color:#cccccc;">index.es.js.map</div>
<div class="t" style="left:680.1px;top:148.11px;line-height:9px;height:9px;font-size:5.50px;font-weight:bold;color:#cbcb41;letter-spacing:-0.2px;">JS</div>
<div class="t" style="left:690.1px;top:147.71px;line-height:10px;height:10px;font-size:7.00px;letter-spacing:0.042px;color:#cccccc;">index.js</div>
<div class="t" style="left:680.1px;top:160.33px;line-height:9px;height:9px;font-size:5.50px;font-weight:bold;color:#cbcb41;letter-spacing:-0.2px;">JS</div>
<div class="t" style="left:690.1px;top:159.93px;line-height:10px;height:10px;font-size:7.00px;letter-spacing:0.047px;color:#cccccc;">index.js.map</div>
<svg style="position:absolute;left:676.5px;top:173.654px;" width="7" height="7" viewBox="0 0 7 7"><path d="M2.4 1L4.9 3.5L2.4 6" fill="none" stroke="#c5c5c5" stroke-width=".85"/></svg>
<div class="t" style="left:685.7px;top:172.15px;line-height:10px;height:10px;font-size:7.00px;letter-spacing:0.053px;color:#cccccc;">docs</div>
<svg style="position:absolute;left:676.5px;top:185.876px;" width="7" height="7" viewBox="0 0 7 7"><path d="M2.4 1L4.9 3.5L2.4 6" fill="none" stroke="#c5c5c5" stroke-width=".85"/></svg>
<div class="t" style="left:685.7px;top:184.38px;line-height:10px;height:10px;font-size:7.00px;letter-spacing:0.044px;color:#cccccc;">pics</div>
<svg style="position:absolute;left:676.5px;top:198.098px;" width="7" height="7" viewBox="0 0 7 7"><path d="M1 2.4L3.5 4.9L6 2.4" fill="none" stroke="#c5c5c5" stroke-width=".85"/></svg>
<div class="t" style="left:685.7px;top:196.60px;line-height:10px;height:10px;font-size:7.00px;letter-spacing:0.044px;color:#f0776c;">src</div>
<div style="left:828.4px;top:199.898px;width:3.4px;height:3.4px;background:#8f4f49;border-radius:50%;"></div>
<svg style="position:absolute;left:680.9px;top:210.32px;" width="7" height="7" viewBox="0 0 7 7"><path d="M1 2.4L3.5 4.9L6 2.4" fill="none" stroke="#c5c5c5" stroke-width=".85"/></svg>
<div class="t" style="left:690.1px;top:208.82px;line-height:10px;height:10px;font-size:7.00px;letter-spacing:0.054px;color:#f0776c;">components</div>
<div style="left:828.4px;top:212.12px;width:3.4px;height:3.4px;background:#8f4f49;border-radius:50%;"></div>
<div class="t" style="left:684.5px;top:221.44px;line-height:9px;height:9px;font-size:5.50px;font-weight:bold;color:#cbcb41;letter-spacing:-0.2px;">JS</div>
<div class="t" style="left:694.5px;top:221.04px;line-height:10px;height:10px;font-size:7.00px;letter-spacing:0.007px;color:#f0776c;">DropzoneArea.js</div>
<div class="t" style="left:820.686px;top:221.04px;line-height:10px;height:10px;font-size:7.00px;color:#f0776c;">2, M</div>
<svg style="position:absolute;left:684.3px;top:234.764px;" width="7" height="7" viewBox="0 0 7 7"><path d="M1.4 0.8H5.6V3.2H6.8L3.5 6.6L0.2 3.2H1.4Z" fill="#519aba"/></svg>
<div class="t" style="left:694.5px;top:233.26px;line-height:10px;height:10px;font-size:7.00px;letter-spacing:0.008px;color:#e2c08d;">DropzoneArea.md</div>
<div class="t" style="left:828.469px;top:233.26px;line-height:10px;height:10px;font-size:7.00px;color:#e2c08d;">M</div>
<div class="t" style="left:684.5px;top:245.89px;line-height:9px;height:9px;font-size:5.50px;font-weight:bold;color:#cbcb41;letter-spacing:-0.2px;">JS</div>
<div class="t" style="left:694.5px;top:245.49px;line-height:10px;height:10px;font-size:7.00px;letter-spacing:0.012px;color:#cccccc;">DropzoneDialog.js</div>
<svg style="position:absolute;left:684.3px;top:259.208px;" width="7" height="7" viewBox="0 0 7 7"><path d="M1.4 0.8H5.6V3.2H6.8L3.5 6.6L0.2 3.2H1.4Z" fill="#519aba"/></svg>
<div class="t" style="left:694.5px;top:257.71px;line-height:10px;height:10px;font-size:7.00px;letter-spacing:0.013px;color:#e2c08d;">DropzoneDialog.md</div>
<div class="t" style="left:828.469px;top:257.71px;line-height:10px;height:10px;font-size:7.00px;color:#e2c08d;">M</div>
<div style="left:667px;top:268.83px;width:175px;height:12.2px;background:#37373d;"></div>
<div class="t" style="left:684.5px;top:270.33px;line-height:9px;height:9px;font-size:5.50px;font-weight:bold;color:#cbcb41;letter-spacing:-0.2px;">JS</div>
<div class="t" style="left:694.5px;top:269.93px;line-height:10px;height:10px;font-size:7.00px;color:#f0776c;">PreviewList.js</div>
<div class="t" style="left:820.686px;top:269.93px;line-height:10px;height:10px;font-size:7.00px;color:#f0776c;">5, M</div>
<div class="t" style="left:684.5px;top:282.55px;line-height:9px;height:9px;font-size:5.50px;font-weight:bold;color:#cbcb41;letter-spacing:-0.2px;">JS</div>
<div class="t" style="left:694.5px;top:282.15px;line-height:10px;height:10px;font-size:7.00px;letter-spacing:0.012px;color:#cccccc;">SnackbarContentWrapper.js</div>
<div class="t" style="left:680.1px;top:294.77px;line-height:9px;height:9px;font-size:5.50px;font-weight:bold;color:#cbcb41;letter-spacing:-0.2px;">JS</div>
<div class="t" style="left:690.1px;top:294.37px;line-height:10px;height:10px;font-size:7.00px;letter-spacing:0.043px;color:#cccccc;">helpers.js</div>
<div class="t" style="left:680.1px;top:307.00px;line-height:9px;height:9px;font-size:5.50px;font-weight:bold;color:#519aba;letter-spacing:-0.2px;">TS</div>
<div class="t" style="left:690.1px;top:306.60px;line-height:10px;height:10px;font-size:7.00px;letter-spacing:0.043px;color:#cccccc;">index.d.ts</div>
<div class="t" style="left:680.1px;top:319.22px;line-height:9px;height:9px;font-size:5.50px;font-weight:bold;color:#cbcb41;letter-spacing:-0.2px;">JS</div>
<div class="t" style="left:690.1px;top:318.82px;line-height:10px;height:10px;font-size:7.00px;letter-spacing:0.042px;color:#cccccc;">index.js</div>
<div class="t" style="left:675.7px;top:331.44px;line-height:9px;height:9px;font-size:5.50px;font-weight:bold;color:#cbcb41;letter-spacing:-0.2px;">JS</div>
<div class="t" style="left:685.7px;top:331.04px;line-height:10px;height:10px;font-size:7.00px;letter-spacing:0.041px;color:#cccccc;">.babelrc.js</div>
<svg style="position:absolute;left:675.5px;top:344.762px;" width="7" height="7" viewBox="0 0 7 7"><circle cx="3.5" cy="3.5" r="2.9" fill="#8a5cd6"/><circle cx="3.5" cy="3.5" r="1.2" fill="#d8c7f5"/></svg>
<div class="t" style="left:685.7px;top:343.26px;line-height:10px;height:10px;font-size:7.00px;letter-spacing:0.040px;color:#cccccc;">.eslintrc.json</div>
<svg style="position:absolute;left:675.5px;top:356.984px;" width="7" height="7" viewBox="0 0 7 7"><path d="M3.5 0.6L6.4 3.5L3.5 6.4L0.6 3.5Z" fill="#4f565c"/></svg>
<div class="t" style="left:685.7px;top:355.48px;line-height:10px;height:10px;font-size:7.00px;letter-spacing:0.041px;color:#cccccc;">.gitignore</div>
<div class="t" style="left:675.7px;top:368.11px;line-height:9px;height:9px;font-size:5.50px;font-weight:bold;color:#cbcb41;letter-spacing:-0.2px;">JS</div>
<div class="t" style="left:685.7px;top:367.71px;line-height:10px;height:10px;font-size:7.00px;letter-spacing:0.048px;color:#cccccc;">.mochasetup.js</div>
<div class="t" style="left:675.4px;top:379.93px;line-height:10px;height:10px;font-size:6.40px;font-weight:bold;color:#cbcb41;letter-spacing:0.3px;">{}</div>
<div class="t" style="left:685.7px;top:379.93px;line-height:10px;height:10px;font-size:7.00px;letter-spacing:0.045px;color:#cccccc;">.size-snapshot.json</div>
<svg style="position:absolute;left:675.5px;top:393.65px;" width="7" height="7" viewBox="0 0 7 7"><circle cx="3.5" cy="3.5" r="2.7" fill="none" stroke="#519aba" stroke-width=".8"/><path d="M3.5 2V3.6L4.6 4.2" fill="none" stroke="#519aba" stroke-width=".7"/></svg>
<div class="t" style="left:685.7px;top:392.15px;line-height:10px;height:10px;font-size:7.00px;letter-spacing:-0.255px;color:#cccccc;">CHANGELOG.md</div>
<svg style="position:absolute;left:675.5px;top:405.872px;" width="7" height="7" viewBox="0 0 7 7"><path d="M1.4 0.8H5.6V3.2H6.8L3.5 6.6L0.2 3.2H1.4Z" fill="#519aba"/></svg>
<div class="t" style="left:685.7px;top:404.37px;line-height:10px;height:10px;font-size:7.00px;letter-spacing:-0.287px;color:#cccccc;">CODE_OF_CONDUCT.md</div>
<svg style="position:absolute;left:675.5px;top:418.094px;" width="7" height="7" viewBox="0 0 7 7"><path d="M1.4 0.8H5.6V3.2H6.8L3.5 6.6L0.2 3.2H1.4Z" fill="#519aba"/></svg>
<div class="t" style="left:685.7px;top:416.59px;line-height:10px;height:10px;font-size:7.00px;letter-spacing:-0.254px;color:#cccccc;">CONTRIBUTING.md</div>
<svg style="position:absolute;left:675.5px;top:429.816px;" width="7" height="8" viewBox="0 0 7 8"><circle cx="3.5" cy="2.2" r="1.9" fill="#cbcb41"/><path d="M2.2 3.6L1.6 7.6L3.5 6.4L5.4 7.6L4.8 3.6Z" fill="#cbcb41"/></svg>
<div class="t" style="left:685.7px;top:428.82px;line-height:10px;height:10px;font-size:7.00px;letter-spacing:-0.330px;color:#cccccc;">LICENSE</div>
<div class="t" style="left:675.4px;top:441.04px;line-height:10px;height:10px;font-size:6.40px;font-weight:bold;color:#cbcb41;letter-spacing:0.3px;">{}</div>
<div class="t" style="left:685.7px;top:441.04px;line-height:10px;height:10px;font-size:7.00px;letter-spacing:0.049px;color:#cccccc;">package.json</div>
<svg style="position:absolute;left:675.5px;top:454.76px;" width="7" height="7" viewBox="0 0 7 7"><circle cx="3.5" cy="3.5" r="2.7" fill="none" stroke="#519aba" stroke-width=".8"/><path d="M3.5 3.1V5M3.5 1.9V2.5" stroke="#519aba" stroke-width=".8"/></svg>
<div class="t" style="left:685.7px;top:453.26px;line-height:10px;height:10px;font-size:7.00px;letter-spacing:-0.215px;color:#cccccc;">README.md</div>
<svg style="position:absolute;left:675.5px;top:466.482px;" width="7" height="8" viewBox="0 0 7 8"><path d="M1 0.8H4Q6.4 1 6.2 3.2Q6 4.6 4.6 5L6.4 7.6H1Z" fill="#e23f3a"/><path d="M2.6 2.4H3.8Q4.6 2.6 4.4 3.4L2.6 6Z" fill="#2a0d0c"/></svg>
<div class="t" style="left:685.7px;top:465.48px;line-height:10px;height:10px;font-size:7.00px;letter-spacing:0.040px;color:#cccccc;">rollup.config.js</div>
<div class="t" style="left:675.7px;top:478.10px;line-height:9px;height:9px;font-size:5.50px;font-weight:bold;color:#cbcb41;letter-spacing:-0.2px;">JS</div>
<div class="t" style="left:685.7px;top:477.70px;line-height:10px;height:10px;font-size:7.00px;letter-spacing:0.042px;color:#cccccc;">styleguide.config.js</div>
<svg style="position:absolute;left:675.5px;top:491.426px;" width="7" height="7" viewBox="0 0 7 7"><path d="M4 0.6Q5 2 4.6 3.4Q6 4.2 5.2 5.6L6.6 6.2H0.8Q1 4.8 2.2 4.4Q2 2.2 4 0.6Z" fill="#519aba"/></svg>
<div class="t" style="left:685.7px;top:489.93px;line-height:10px;height:10px;font-size:7.00px;letter-spacing:0.044px;color:#cccccc;">yarn.lock</div>
<div style="left:667px;top:644.8px;width:175px;height:0.8px;background:#333334;"></div>
<svg style="position:absolute;left:668.5px;top:647.5px;" width="7" height="7" viewBox="0 0 7 7"><path d="M2.4 1L4.9 3.5L2.4 6" fill="none" stroke="#c5c5c5" stroke-width=".85"/></svg>
<div class="t" style="left:678px;top:646.50px;line-height:9px;height:9px;font-size:5.80px;font-weight:bold;letter-spacing:-0.136px;color:#dddddd;">OUTLINE</div>
<div style="left:667px;top:657.3px;width:175px;height:0.8px;background:#333334;"></div>
<svg style="position:absolute;left:668.5px;top:660px;" width="7" height="7" viewBox="0 0 7 7"><path d="M2.4 1L4.9 3.5L2.4 6" fill="none" stroke="#c5c5c5" stroke-width=".85"/></svg>
<div class="t" style="left:678px;top:659.00px;line-height:9px;height:9px;font-size:5.80px;font-weight:bold;letter-spacing:-0.008px;color:#dddddd;">TIMELINE</div>
<div style="left:667px;top:669.5px;width:175px;height:0.8px;background:#333334;"></div>
<svg style="position:absolute;left:668.5px;top:672.2px;" width="7" height="7" viewBox="0 0 7 7"><path d="M2.4 1L4.9 3.5L2.4 6" fill="none" stroke="#c5c5c5" stroke-width=".85"/></svg>
<div class="t" style="left:678px;top:671.20px;line-height:9px;height:9px;font-size:5.80px;font-weight:bold;letter-spacing:0.033px;color:#dddddd;">NPM SCRIPTS</div>
<div style="left:842px;top:16.5px;width:438px;height:666px;background:#1e1e1e;"></div>
<div style="left:842px;top:16.5px;width:438px;height:19.6px;background:#252526;"></div>
<div style="left:842px;top:16.5px;width:75.5px;height:19.6px;background:#1e1e1e;"></div>
<div style="left:918px;top:16.5px;width:83.5px;height:19.6px;background:#2d2d2d;"></div>
<div class="t" style="left:850.4px;top:21.70px;line-height:9px;height:9px;font-size:5.50px;font-weight:bold;color:#cbcb41;letter-spacing:-0.2px;">JS</div>
<div class="t" style="left:860px;top:22.10px;line-height:10px;height:10px;font-size:7.00px;letter-spacing:-0.092px;color:#ffffff;">PreviewList.js</div>
<svg style="position:absolute;left:905.5px;top:23.6px;" width="7" height="7" viewBox="0 0 7 7"><path d="M1 1L6 6M6 1L1 6" stroke="#e0e0e0" stroke-width=".95"/></svg>
<div class="t" style="left:926px;top:21.70px;line-height:9px;height:9px;font-size:5.50px;font-weight:bold;color:#cbcb41;letter-spacing:-0.2px;">JS</div>
<div class="t" style="left:935px;top:22.10px;line-height:10px;height:10px;font-size:7.00px;font-style:italic;letter-spacing:-0.043px;color:#8c8c8c;">DropzoneArea.js</div>
<svg style="position:absolute;left:1208.5px;top:22.5px;" width="9.4" height="9.4" viewBox="0 0 11 11"><path d="M5.5 0.6L10.4 5.5L5.5 10.4L0.6 5.5Z" fill="#f0f0f0"/><path d="M4.4 3.6L6.4 5.5L4.4 7.4M6.4 5.5H3.4" fill="none" stroke="#252526" stroke-width=".9"/></svg>
<svg style="position:absolute;left:1226px;top:22.5px;" width="9.4" height="9.4" viewBox="0 0 11 11"><path d="M2.6 2.4V8.4M2.6 8.4L1.2 7M2.6 8.4L4 7M8.4 8.6V2.6M8.4 2.6L7 4M8.4 2.6L9.8 4M2.6 2.4H6M8.4 8.6H5" fill="none" stroke="#e8e8e8" stroke-width="1"/></svg>
<svg style="position:absolute;left:1244px;top:22.5px;" width="9.4" height="9.4" viewBox="0 0 11 11"><rect x="1" y="1.4" width="9" height="8.2" rx=".8" fill="none" stroke="#d7d2c0" stroke-width="1.1"/><path d="M5.5 1.4V9.6" stroke="#d7d2c0" stroke-width="1.1"/></svg>
<div style="left:1261px;top:26px;width:1.5px;height:1.5px;background:#d0d0d0;border-radius:50%;"></div>
<div style="left:1264.8px;top:26px;width:1.5px;height:1.5px;background:#d0d0d0;border-radius:50%;"></div>
<div style="left:1268.6px;top:26px;width:1.5px;height:1.5px;background:#d0d0d0;border-radius:50%;"></div>
<div class="t" style="left:851px;top:37.80px;line-height:10px;height:10px;font-size:7.00px;letter-spacing:0.223px;color:#a0a0a0;">src</div>
<svg style="position:absolute;left:862px;top:38.8px;" width="6" height="7" viewBox="0 0 6 7"><path d="M1.8 1L4.4 3.5L1.8 6" fill="none" stroke="#a0a0a0" stroke-width=".8"/></svg>
<div class="t" style="left:869.5px;top:37.80px;line-height:10px;height:10px;font-size:7.00px;letter-spacing:0.036px;color:#a0a0a0;">components</div>
<svg style="position:absolute;left:909.5px;top:38.8px;" width="6" height="7" viewBox="0 0 6 7"><path d="M1.8 1L4.4 3.5L1.8 6" fill="none" stroke="#a0a0a0" stroke-width=".8"/></svg>
<div class="t" style="left:920px;top:37.30px;line-height:9px;height:9px;font-size:5.50px;font-weight:bold;color:#cbcb41;letter-spacing:-0.2px;">JS</div>
<div class="t" style="left:930px;top:37.80px;line-height:10px;height:10px;font-size:7.00px;letter-spacing:-0.092px;color:#a0a0a0;">PreviewList.js</div>
<svg style="position:absolute;left:972.5px;top:38.8px;" width="6" height="7" viewBox="0 0 6 7"><path d="M1.8 1L4.4 3.5L1.8 6" fill="none" stroke="#a0a0a0" stroke-width=".8"/></svg>
<svg style="position:absolute;left:980px;top:38px;" width="9" height="9" viewBox="0 0 9 9"><path d="M1 2.6H3.6L4.6 1.6L5.6 2.6L4.6 3.6L3.6 2.6M4.6 3.6V6.4H6.2M6.2 5.4L7.2 6.4L6.2 7.4L5.2 6.4ZM4.6 4.6H6.4L7.2 3.8L8 4.6L7.2 5.4L6.4 4.6" fill="none" stroke="#ee9d28" stroke-width=".85"/></svg>
<div class="t" style="left:993px;top:37.80px;line-height:10px;height:10px;font-size:7.00px;letter-spacing:-0.117px;color:#a0a0a0;">PreviewList</div>
<svg style="position:absolute;left:1029px;top:38.8px;" width="6" height="7" viewBox="0 0 6 7"><path d="M1.8 1L4.4 3.5L1.8 6" fill="none" stroke="#a0a0a0" stroke-width=".8"/></svg>
<svg style="position:absolute;left:1036.5px;top:38px;" width="9" height="9" viewBox="0 0 9 9"><path d="M4.5 0.8L8 2.6V6.4L4.5 8.2L1 6.4V2.6ZM1 2.6L4.5 4.4L8 2.6M4.5 4.4V8.2" fill="none" stroke="#b180d7" stroke-width=".85" stroke-linejoin="round"/></svg>
<div class="t" style="left:1049px;top:37.80px;line-height:10px;height:10px;font-size:7.00px;letter-spacing:0.170px;color:#a0a0a0;">constructor</div>
<div style="left:842px;top:48.0px;width:438px;height:443.0px;overflow:hidden"><div style="left:38px;top:-4px;width:8.5px;height:11px;background:rgba(255,255,64,0.075);"></div><div style="left:46.5px;top:-4px;width:8.5px;height:11px;background:rgba(127,255,127,0.075);"></div><div class="t m" style="left:38px;top:-3.96px;line-height:11px;height:11px;font-size:7.63px;color:#474847;letter-spacing:-0.306px;">····</div><div class="t m" style="left:38px;top:-3.96px;line-height:11px;height:11px;font-size:7.63px;color:#d4d4d4;letter-spacing:-0.306px;"><span style="color:#d4d4d4">    </span><span style="color:#f0cd20">}</span><span style="color:#d4d4d4">,</span></div><div class="t m" style="left:14.45px;top:-3.96px;line-height:11px;height:11px;font-size:7.63px;color:#858585;letter-spacing:-0.306px;">39</div><div style="left:38px;top:7px;width:8.5px;height:10px;background:rgba(255,255,64,0.075);"></div><div style="left:46.5px;top:7px;width:8.5px;height:10px;background:rgba(127,255,127,0.075);"></div><div class="t m" style="left:38px;top:6.60px;line-height:11px;height:11px;font-size:7.63px;color:#474847;letter-spacing:-0.306px;">····         ·</div><div class="t m" style="left:38px;top:6.60px;line-height:11px;height:11px;font-size:7.63px;color:#d4d4d4;letter-spacing:-0.306px;"><span style="color:#9cdcfe">    fileIcon</span><span style="color:#d4d4d4">: </span><span style="color:#f0cd20">{</span></div><div class="t m" style="left:14.45px;top:6.60px;line-height:11px;height:11px;font-size:7.63px;color:#858585;letter-spacing:-0.306px;">40</div><div style="left:38px;top:17px;width:8.5px;height:11px;background:rgba(255,255,64,0.075);"></div><div style="left:46.5px;top:17px;width:8.5px;height:11px;background:rgba(127,255,127,0.075);"></div><div style="left:55px;top:17px;width:8.5px;height:11px;background:rgba(255,127,255,0.075);"></div><div style="left:63.5px;top:17px;width:8.5px;height:11px;background:rgba(79,236,236,0.075);"></div><div class="t m" style="left:38px;top:17.16px;line-height:11px;height:11px;font-size:7.63px;color:#474847;letter-spacing:-0.306px;">········         ·</div><div class="t m" style="left:38px;top:17.16px;line-height:11px;height:11px;font-size:7.63px;color:#d4d4d4;letter-spacing:-0.306px;"><span style="color:#9cdcfe">        flexGrow</span><span style="color:#d4d4d4">: </span><span style="color:#b5cea8">1</span><span style="color:#d4d4d4">,</span></div><div class="t m" style="left:14.45px;top:17.16px;line-height:11px;height:11px;font-size:7.63px;color:#858585;letter-spacing:-0.306px;">41</div><div style="left:38px;top:28px;width:8.5px;height:11px;background:rgba(255,255,64,0.075);"></div><div style="left:46.5px;top:28px;width:8.5px;height:11px;background:rgba(127,255,127,0.075);"></div><div style="left:55px;top:28px;width:8.5px;height:11px;background:rgba(255,127,255,0.075);"></div><div style="left:63.5px;top:28px;width:8.5px;height:11px;background:rgba(79,236,236,0.075);"></div><div class="t m" style="left:38px;top:27.71px;line-height:11px;height:11px;font-size:7.63px;color:#474847;letter-spacing:-0.306px;">········       ·</div><div class="t m" style="left:38px;top:27.71px;line-height:11px;height:11px;font-size:7.63px;color:#d4d4d4;letter-spacing:-0.306px;"><span style="color:#9cdcfe">        height</span><span style="color:#d4d4d4">: </span><span style="color:#ce9178">'50%'</span><span style="color:#d4d4d4">,</span></div><div class="t m" style="left:14.45px;top:27.71px;line-height:11px;height:11px;font-size:7.63px;color:#858585;letter-spacing:-0.306px;">42</div><div style="left:38px;top:39px;width:8.5px;height:10px;background:rgba(255,255,64,0.075);"></div><div style="left:46.5px;top:39px;width:8.5px;height:10px;background:rgba(127,255,127,0.075);"></div><div style="left:55px;top:39px;width:8.5px;height:10px;background:rgba(255,127,255,0.075);"></div><div style="left:63.5px;top:39px;width:8.5px;height:10px;background:rgba(79,236,236,0.075);"></div><div class="t m" style="left:38px;top:38.27px;line-height:11px;height:11px;font-size:7.63px;color:#474847;letter-spacing:-0.306px;">········          ·</div><div class="t m" style="left:38px;top:38.27px;line-height:11px;height:11px;font-size:7.63px;color:#d4d4d4;letter-spacing:-0.306px;"><span style="color:#9cdcfe">        marginTop</span><span style="color:#d4d4d4">: </span><span style="color:#dcdcaa">spacing</span><span style="color:#da70d6">(</span><span style="color:#b5cea8">3</span><span style="color:#da70d6">)</span><span style="color:#d4d4d4">,</span></div><div class="t m" style="left:14.45px;top:38.27px;line-height:11px;height:11px;font-size:7.63px;color:#858585;letter-spacing:-0.306px;">43</div><div style="left:38px;top:49px;width:8.5px;height:11px;background:rgba(255,255,64,0.075);"></div><div style="left:46.5px;top:49px;width:8.5px;height:11px;background:rgba(127,255,127,0.075);"></div><div class="t m" style="left:38px;top:48.82px;line-height:11px;height:11px;font-size:7.63px;color:#474847;letter-spacing:-0.306px;">····</div><div class="t m" style="left:38px;top:48.82px;line-height:11px;height:11px;font-size:7.63px;color:#d4d4d4;letter-spacing:-0.306px;"><span style="color:#d4d4d4">    </span><span style="color:#f0cd20">}</span><span style="color:#d4d4d4">,</span></div><div class="t m" style="left:14.45px;top:48.82px;line-height:11px;height:11px;font-size:7.63px;color:#858585;letter-spacing:-0.306px;">44</div><div style="left:38px;top:60px;width:8.5px;height:10px;background:rgba(255,255,64,0.075);"></div><div style="left:46.5px;top:60px;width:8.5px;height:10px;background:rgba(127,255,127,0.075);"></div><div class="t m" style="left:38px;top:59.38px;line-height:11px;height:11px;font-size:7.63px;color:#474847;letter-spacing:-0.306px;">····               ·</div><div class="t m" style="left:38px;top:59.38px;line-height:11px;height:11px;font-size:7.63px;color:#d4d4d4;letter-spacing:-0.306px;"><span style="color:#9cdcfe">    fileIconBottom</span><span style="color:#d4d4d4">: </span><span style="color:#f0cd20">{</span></div><div class="t m" style="left:14.45px;top:59.38px;line-height:11px;height:11px;font-size:7.63px;color:#858585;letter-spacing:-0.306px;">45</div><div style="left:38px;top:70px;width:8.5px;height:11px;background:rgba(255,255,64,0.075);"></div><div style="left:46.5px;top:70px;width:8.5px;height:11px;background:rgba(127,255,127,0.075);"></div><div style="left:55px;top:70px;width:8.5px;height:11px;background:rgba(255,127,255,0.075);"></div><div style="left:63.5px;top:70px;width:8.5px;height:11px;background:rgba(79,236,236,0.075);"></div><div class="t m" style="left:38px;top:69.93px;line-height:11px;height:11px;font-size:7.63px;color:#474847;letter-spacing:-0.306px;">········          ·</div><div class="t m" style="left:38px;top:69.93px;line-height:11px;height:11px;font-size:7.63px;color:#d4d4d4;letter-spacing:-0.306px;"><span style="color:#9cdcfe">        marginTop</span><span style="color:#d4d4d4">: </span><span style="color:#dcdcaa">spacing</span><span style="color:#da70d6">(</span><span style="color:#b5cea8">9</span><span style="color:#da70d6">)</span><span style="color:#d4d4d4">,</span></div><div class="t m" style="left:14.45px;top:69.93px;line-height:11px;height:11px;font-size:7.63px;color:#858585;letter-spacing:-0.306px;">46</div><div style="left:38px;top:81px;width:8.5px;height:10px;background:rgba(255,255,64,0.075);"></div><div style="left:46.5px;top:81px;width:8.5px;height:10px;background:rgba(127,255,127,0.075);"></div><div class="t m" style="left:38px;top:80.49px;line-height:11px;height:11px;font-size:7.63px;color:#474847;letter-spacing:-0.306px;">····</div><div class="t m" style="left:38px;top:80.49px;line-height:11px;height:11px;font-size:7.63px;color:#d4d4d4;letter-spacing:-0.306px;"><span style="color:#d4d4d4">    </span><span style="color:#f0cd20">}</span><span style="color:#d4d4d4">,</span></div><div class="t m" style="left:14.45px;top:80.49px;line-height:11px;height:11px;font-size:7.63px;color:#858585;letter-spacing:-0.306px;">47</div><div class="t m" style="left:38px;top:91.04px;line-height:11px;height:11px;font-size:7.63px;color:#d4d4d4;letter-spacing:-0.306px;"><span style="color:#f0cd20">}</span><span style="color:#f0cd20">)</span><span style="color:#d4d4d4">;</span></div><div class="t m" style="left:14.45px;top:91.04px;line-height:11px;height:11px;font-size:7.63px;color:#858585;letter-spacing:-0.306px;">48</div><div class="t m" style="left:14.45px;top:101.60px;line-height:11px;height:11px;font-size:7.63px;color:#858585;letter-spacing:-0.306px;">49</div><div class="t m" style="left:38px;top:112.16px;line-height:11px;height:11px;font-size:7.63px;color:#474847;letter-spacing:-0.306px;">        ·</div><div class="t m" style="left:38px;top:112.16px;line-height:11px;height:11px;font-size:7.63px;color:#d4d4d4;letter-spacing:-0.306px;"><span style="color:#569cd6">function</span><span style="color:#dcdcaa"> PreviewList</span><span style="color:#f0cd20">(</span><span style="color:#f0cd20">{</span></div><div class="t m" style="left:14.45px;top:112.16px;line-height:11px;height:11px;font-size:7.63px;color:#858585;letter-spacing:-0.306px;">50</div><div style="left:38px;top:123px;width:8.5px;height:11px;background:rgba(255,255,64,0.075);"></div><div style="left:46.5px;top:123px;width:8.5px;height:11px;background:rgba(127,255,127,0.075);"></div><div class="t m" style="left:38px;top:122.71px;line-height:11px;height:11px;font-size:7.63px;color:#474847;letter-spacing:-0.306px;">····</div><div class="t m" style="left:38px;top:122.71px;line-height:11px;height:11px;font-size:7.63px;color:#d4d4d4;letter-spacing:-0.306px;"><span style="color:#9cdcfe">    classes</span><span style="color:#d4d4d4">,</span></div><div class="t m" style="left:14.45px;top:122.71px;line-height:11px;height:11px;font-size:7.63px;color:#858585;letter-spacing:-0.306px;">51</div><div style="left:38px;top:134px;width:8.5px;height:10px;background:rgba(255,255,64,0.075);"></div><div style="left:46.5px;top:134px;width:8.5px;height:10px;background:rgba(127,255,127,0.075);"></div><div class="t m" style="left:38px;top:133.27px;line-height:11px;height:11px;font-size:7.63px;color:#474847;letter-spacing:-0.306px;">····</div><div class="t m" style="left:38px;top:133.27px;line-height:11px;height:11px;font-size:7.63px;color:#d4d4d4;letter-spacing:-0.306px;"><span style="color:#9cdcfe">    fileObjects</span><span style="color:#d4d4d4">,</span></div><div class="t m" style="left:14.45px;top:133.27px;line-height:11px;height:11px;font-size:7.63px;color:#858585;letter-spacing:-0.306px;">52</div><div style="left:38px;top:144px;width:8.5px;height:11px;background:rgba(255,255,64,0.075);"></div><div style="left:46.5px;top:144px;width:8.5px;height:11px;background:rgba(127,255,127,0.075);"></div><div class="t m" style="left:38px;top:143.82px;line-height:11px;height:11px;font-size:7.63px;color:#474847;letter-spacing:-0.306px;">····</div><div class="t m" style="left:38px;top:143.82px;line-height:11px;height:11px;font-size:7.63px;color:#d4d4d4;letter-spacing:-0.306px;"><span style="color:#9cdcfe">    getPreviewIcon</span><span style="color:#d4d4d4">,</span></div><div class="t m" style="left:14.45px;top:143.82px;line-height:11px;height:11px;font-size:7.63px;color:#858585;letter-spacing:-0.306px;">53</div><div style="left:38px;top:155px;width:8.5px;height:10px;background:rgba(255,255,64,0.075);"></div><div style="left:46.5px;top:155px;width:8.5px;height:10px;background:rgba(127,255,127,0.075);"></div><div class="t m" style="left:38px;top:154.38px;line-height:11px;height:11px;font-size:7.63px;color:#474847;letter-spacing:-0.306px;">····</div><div class="t m" style="left:38px;top:154.38px;line-height:11px;height:11px;font-size:7.63px;color:#d4d4d4;letter-spacing:-0.306px;"><span style="color:#9cdcfe">    handleRemove</span><span style="color:#d4d4d4">,</span></div><div class="t m" style="left:14.45px;top:154.38px;line-height:11px;height:11px;font-size:7.63px;color:#858585;letter-spacing:-0.306px;">54</div><div style="left:38px;top:165px;width:8.5px;height:11px;background:rgba(255,255,64,0.075);"></div><div style="left:46.5px;top:165px;width:8.5px;height:11px;background:rgba(127,255,127,0.075);"></div><div class="t m" style="left:38px;top:164.93px;line-height:11px;height:11px;font-size:7.63px;color:#474847;letter-spacing:-0.306px;">····</div><div class="t m" style="left:38px;top:164.93px;line-height:11px;height:11px;font-size:7.63px;color:#d4d4d4;letter-spacing:-0.306px;"><span style="color:#9cdcfe">    filesLimit</span><span style="color:#d4d4d4">,</span></div><div class="t m" style="left:14.45px;top:164.93px;line-height:11px;height:11px;font-size:7.63px;color:#c6c6c6;letter-spacing:-0.306px;">55</div><div style="left:38px;top:176px;width:8.5px;height:10px;background:rgba(255,255,64,0.075);"></div><div style="left:46.5px;top:176px;width:8.5px;height:10px;background:rgba(127,255,127,0.075);"></div><div class="t m" style="left:38px;top:175.49px;line-height:11px;height:11px;font-size:7.63px;color:#474847;letter-spacing:-0.306px;">····</div><div class="t m" style="left:38px;top:175.49px;line-height:11px;height:11px;font-size:7.63px;color:#d4d4d4;letter-spacing:-0.306px;"><span style="color:#9cdcfe">    previewChipProps</span><span style="color:#d4d4d4">,</span></div><div class="t m" style="left:14.45px;top:175.49px;line-height:11px;height:11px;font-size:7.63px;color:#858585;letter-spacing:-0.306px;">56</div><div style="left:38px;top:186px;width:8.5px;height:11px;background:rgba(255,255,64,0.075);"></div><div style="left:46.5px;top:186px;width:8.5px;height:11px;background:rgba(127,255,127,0.075);"></div><div class="t m" style="left:38px;top:186.05px;line-height:11px;height:11px;font-size:7.63px;color:#474847;letter-spacing:-0.306px;">····</div><div class="t m" style="left:38px;top:186.05px;line-height:11px;height:11px;font-size:7.63px;color:#d4d4d4;letter-spacing:-0.306px;"><span style="color:#9cdcfe">    previewGridClasses</span><span style="color:#d4d4d4">,</span></div><div class="t m" style="left:14.45px;top:186.05px;line-height:11px;height:11px;font-size:7.63px;color:#858585;letter-spacing:-0.306px;">57</div><div style="left:38px;top:197px;width:8.5px;height:10px;background:rgba(255,255,64,0.075);"></div><div style="left:46.5px;top:197px;width:8.5px;height:10px;background:rgba(127,255,127,0.075);"></div><div class="t m" style="left:38px;top:196.60px;line-height:11px;height:11px;font-size:7.63px;color:#474847;letter-spacing:-0.306px;">····</div><div class="t m" style="left:38px;top:196.60px;line-height:11px;height:11px;font-size:7.63px;color:#d4d4d4;letter-spacing:-0.306px;"><span style="color:#9cdcfe">    previewGridProps</span><span style="color:#d4d4d4">,</span></div><div class="t m" style="left:14.45px;top:196.60px;line-height:11px;height:11px;font-size:7.63px;color:#858585;letter-spacing:-0.306px;">58</div><div style="left:38px;top:207px;width:8.5px;height:11px;background:rgba(255,255,64,0.075);"></div><div style="left:46.5px;top:207px;width:8.5px;height:11px;background:rgba(127,255,127,0.075);"></div><div class="t m" style="left:38px;top:207.16px;line-height:11px;height:11px;font-size:7.63px;color:#474847;letter-spacing:-0.306px;">····</div><div class="t m" style="left:38px;top:207.16px;line-height:11px;height:11px;font-size:7.63px;color:#d4d4d4;letter-spacing:-0.306px;"><span style="color:#9cdcfe">    previewType</span><span style="color:#d4d4d4">,</span></div><div class="t m" style="left:14.45px;top:207.16px;line-height:11px;height:11px;font-size:7.63px;color:#858585;letter-spacing:-0.306px;">59</div><div style="left:38px;top:218px;width:8.5px;height:11px;background:rgba(255,255,64,0.075);"></div><div style="left:46.5px;top:218px;width:8.5px;height:11px;background:rgba(127,255,127,0.075);"></div><div class="t m" style="left:38px;top:217.71px;line-height:11px;height:11px;font-size:7.63px;color:#474847;letter-spacing:-0.306px;">····</div><div class="t m" style="left:38px;top:217.71px;line-height:11px;height:11px;font-size:7.63px;color:#d4d4d4;letter-spacing:-0.306px;"><span style="color:#9cdcfe">    width</span><span style="color:#d4d4d4">,</span></div><div class="t m" style="left:14.45px;top:217.71px;line-height:11px;height:11px;font-size:7.63px;color:#858585;letter-spacing:-0.306px;">60</div><div style="left:38px;top:229px;width:8.5px;height:10px;background:rgba(255,255,64,0.075);"></div><div style="left:46.5px;top:229px;width:8.5px;height:10px;background:rgba(127,255,127,0.075);"></div><div class="t m" style="left:38px;top:228.27px;line-height:11px;height:11px;font-size:7.63px;color:#474847;letter-spacing:-0.306px;">····</div><div class="t m" style="left:38px;top:228.27px;line-height:11px;height:11px;font-size:7.63px;color:#d4d4d4;letter-spacing:-0.306px;"><span style="color:#9cdcfe">    showFileNames</span><span style="color:#d4d4d4">,</span></div><div class="t m" style="left:14.45px;top:228.27px;line-height:11px;height:11px;font-size:7.63px;color:#858585;letter-spacing:-0.306px;">61</div><div style="left:38px;top:239px;width:8.5px;height:11px;background:rgba(255,255,64,0.075);"></div><div style="left:46.5px;top:239px;width:8.5px;height:11px;background:rgba(127,255,127,0.075);"></div><div class="t m" style="left:38px;top:238.82px;line-height:11px;height:11px;font-size:7.63px;color:#474847;letter-spacing:-0.306px;">····</div><div class="t m" style="left:38px;top:238.82px;line-height:11px;height:11px;font-size:7.63px;color:#d4d4d4;letter-spacing:-0.306px;"><span style="color:#9cdcfe">    useChipsForPreview</span><span style="color:#d4d4d4">,</span></div><div class="t m" style="left:14.45px;top:238.82px;line-height:11px;height:11px;font-size:7.63px;color:#858585;letter-spacing:-0.306px;">62</div><div style="left:38px;top:250px;width:8.5px;height:10px;background:rgba(255,255,64,0.075);"></div><div style="left:46.5px;top:250px;width:8.5px;height:10px;background:rgba(127,255,127,0.075);"></div><div class="t m" style="left:38px;top:249.38px;line-height:11px;height:11px;font-size:7.63px;color:#474847;letter-spacing:-0.306px;">····</div><div class="t m" style="left:38px;top:249.38px;line-height:11px;height:11px;font-size:7.63px;color:#d4d4d4;letter-spacing:-0.306px;"><span style="color:#9cdcfe">    getCols</span><span style="color:#d4d4d4">,</span></div><div class="t m" style="left:14.45px;top:249.38px;line-height:11px;height:11px;font-size:7.63px;color:#858585;letter-spacing:-0.306px;">63</div><div class="t m" style="left:38px;top:259.93px;line-height:11px;height:11px;font-size:7.63px;color:#474847;letter-spacing:-0.306px;">  ·</div><div class="t m" style="left:38px;top:259.93px;line-height:11px;height:11px;font-size:7.63px;color:#d4d4d4;letter-spacing:-0.306px;"><span style="color:#f0cd20">}</span><span style="color:#f0cd20">)</span><span style="color:#d4d4d4"> </span><span style="color:#f0cd20">{</span></div><div class="t m" style="left:14.45px;top:259.93px;line-height:11px;height:11px;font-size:7.63px;color:#858585;letter-spacing:-0.306px;">64</div><div style="left:38px;top:271px;width:8.5px;height:10px;background:rgba(255,255,64,0.075);"></div><div style="left:46.5px;top:271px;width:8.5px;height:10px;background:rgba(127,255,127,0.075);"></div><div class="t m" style="left:38px;top:270.49px;line-height:11px;height:11px;font-size:7.63px;color:#474847;letter-spacing:-0.306px;">····     ·             · ·           ·   ·           ·       ·  ·</div><div class="t m" style="left:38px;top:270.49px;line-height:11px;height:11px;font-size:7.63px;color:#d4d4d4;letter-spacing:-0.306px;"><span style="color:#569cd6">    const</span><span style="color:#9cdcfe"> previewInside</span><span style="color:#d4d4d4"> = </span><span style="color:#9cdcfe">previewType</span><span style="color:#d4d4d4"> === </span><span style="color:#ce9178">'inside'</span><span style="color:#d4d4d4">;</span><span style="color:#6a9955">// extract to constants?</span></div><div class="t m" style="left:14.45px;top:270.49px;line-height:11px;height:11px;font-size:7.63px;color:#858585;letter-spacing:-0.306px;">65</div><div style="left:38px;top:281px;width:8.5px;height:11px;background:rgba(255,255,64,0.075);"></div><div style="left:46.5px;top:281px;width:8.5px;height:11px;background:rgba(127,255,127,0.075);"></div><div class="t m" style="left:38px;top:281.05px;line-height:11px;height:11px;font-size:7.63px;color:#474847;letter-spacing:-0.306px;">····     ·    · ·              ·           ·</div><div class="t m" style="left:38px;top:281.05px;line-height:11px;height:11px;font-size:7.63px;color:#d4d4d4;letter-spacing:-0.306px;"><span style="color:#569cd6">    const</span><span style="color:#9cdcfe"> cols</span><span style="color:#d4d4d4"> = </span><span style="color:#dcdcaa">getCols</span><span style="color:#f0cd20">(</span><span style="color:#9cdcfe">width</span><span style="color:#d4d4d4">, </span><span style="color:#9cdcfe">filesLimit</span><span style="color:#d4d4d4">, </span><span style="color:#9cdcfe">fileObjects</span><span style="color:#d4d4d4">.</span><span style="color:#9cdcfe">length</span><span style="color:#f0cd20">)</span><span style="color:#d4d4d4">;</span></div><div class="t m" style="left:14.45px;top:281.05px;line-height:11px;height:11px;font-size:7.63px;color:#858585;letter-spacing:-0.306px;">66</div><div class="t m" style="left:14.45px;top:291.60px;line-height:11px;height:11px;font-size:7.63px;color:#858585;letter-spacing:-0.306px;">67</div><div class="t m" style="left:14.45px;top:302.16px;line-height:11px;height:11px;font-size:7.63px;color:#858585;letter-spacing:-0.306px;">68</div><div style="left:38px;top:313px;width:8.5px;height:11px;background:rgba(255,255,64,0.075);"></div><div style="left:46.5px;top:313px;width:8.5px;height:11px;background:rgba(127,255,127,0.075);"></div><div class="t m" style="left:38px;top:312.71px;line-height:11px;height:11px;font-size:7.63px;color:#474847;letter-spacing:-0.306px;">····  ·                    ·</div><div class="t m" style="left:38px;top:312.71px;line-height:11px;height:11px;font-size:7.63px;color:#d4d4d4;letter-spacing:-0.306px;"><span style="color:#c586c0">    if</span><span style="color:#d4d4d4"> </span><span style="color:#f0cd20">(</span><span style="color:#9cdcfe">useChipsForPreview</span><span style="color:#f0cd20">)</span><span style="color:#d4d4d4"> </span><span style="color:#da70d6">{</span></div><div class="t m" style="left:14.45px;top:312.71px;line-height:11px;height:11px;font-size:7.63px;color:#858585;letter-spacing:-0.306px;">69</div><div style="left:38px;top:324px;width:8.5px;height:10px;background:rgba(255,255,64,0.075);"></div><div style="left:46.5px;top:324px;width:8.5px;height:10px;background:rgba(127,255,127,0.075);"></div><div style="left:55px;top:324px;width:8.5px;height:10px;background:rgba(255,127,255,0.075);"></div><div style="left:63.5px;top:324px;width:8.5px;height:10px;background:rgba(79,236,236,0.075);"></div><div class="t m" style="left:38px;top:323.27px;line-height:11px;height:11px;font-size:7.63px;color:#474847;letter-spacing:-0.306px;">········      ·</div><div class="t m" style="left:38px;top:323.27px;line-height:11px;height:11px;font-size:7.63px;color:#d4d4d4;letter-spacing:-0.306px;"><span style="color:#c586c0">        return</span><span style="color:#d4d4d4"> </span><span style="color:#f0cd20">(</span></div><div class="t m" style="left:14.45px;top:323.27px;line-height:11px;height:11px;font-size:7.63px;color:#858585;letter-spacing:-0.306px;">70</div><div style="left:38px;top:334px;width:8.5px;height:11px;background:rgba(255,255,64,0.075);"></div><div style="left:46.5px;top:334px;width:8.5px;height:11px;background:rgba(127,255,127,0.075);"></div><div style="left:55px;top:334px;width:8.5px;height:11px;background:rgba(255,127,255,0.075);"></div><div style="left:63.5px;top:334px;width:8.5px;height:11px;background:rgba(79,236,236,0.075);"></div><div style="left:72px;top:334px;width:9px;height:11px;background:rgba(255,255,64,0.075);"></div><div style="left:81px;top:334px;width:8.5px;height:11px;background:rgba(127,255,127,0.075);"></div><div class="t m" style="left:38px;top:333.82px;line-height:11px;height:11px;font-size:7.63px;color:#474847;letter-spacing:-0.306px;">············                            ·  ·  ·</div><div class="t m" style="left:38px;top:333.82px;line-height:11px;height:11px;font-size:7.63px;color:#d4d4d4;letter-spacing:-0.306px;"><span style="color:#9cdcfe">            fileObjects</span><span style="color:#d4d4d4">.</span><span style="color:#dcdcaa">map</span><span style="color:#da70d6">(</span><span style="color:#87cefa">(</span><span style="color:#9cdcfe">fileObject</span><span style="color:#d4d4d4">, </span><span style="color:#9cdcfe">i</span><span style="color:#87cefa">)</span><span style="color:#d4d4d4"> </span><span style="color:#569cd6">=&gt;</span><span style="color:#d4d4d4"> </span><span style="color:#87cefa">(</span></div><div class="t m" style="left:14.45px;top:333.82px;line-height:11px;height:11px;font-size:7.63px;color:#858585;letter-spacing:-0.306px;">71</div><div style="left:38px;top:345px;width:8.5px;height:10px;background:rgba(255,255,64,0.075);"></div><div style="left:46.5px;top:345px;width:8.5px;height:10px;background:rgba(127,255,127,0.075);"></div><div style="left:55px;top:345px;width:8.5px;height:10px;background:rgba(255,127,255,0.075);"></div><div style="left:63.5px;top:345px;width:8.5px;height:10px;background:rgba(79,236,236,0.075);"></div><div style="left:72px;top:345px;width:9px;height:10px;background:rgba(255,255,64,0.075);"></div><div style="left:81px;top:345px;width:8.5px;height:10px;background:rgba(127,255,127,0.075);"></div><div style="left:89.5px;top:345px;width:8.5px;height:10px;background:rgba(255,127,255,0.075);"></div><div style="left:98px;top:345px;width:8.5px;height:10px;background:rgba(79,236,236,0.075);"></div><div class="t m" style="left:38px;top:344.38px;line-height:11px;height:11px;font-size:7.63px;color:#474847;letter-spacing:-0.306px;">················    ·</div><div class="t m" style="left:38px;top:344.38px;line-height:11px;height:11px;font-size:7.63px;color:#d4d4d4;letter-spacing:-0.306px;"><span style="color:#d4d4d4">                </span><span style="color:#808080">&lt;</span><span style="color:#569cd6">div</span><span style="color:#9cdcfe"> key</span><span style="color:#d4d4d4">=</span><span style="color:#87cefa">{</span><span style="color:#9cdcfe">i</span><span style="color:#87cefa">}</span><span style="color:#808080">&gt;</span></div><div class="t m" style="left:14.45px;top:344.38px;line-height:11px;height:11px;font-size:7.63px;color:#858585;letter-spacing:-0.306px;">72</div><div style="left:38px;top:355px;width:8.5px;height:11px;background:rgba(255,255,64,0.075);"></div><div style="left:46.5px;top:355px;width:8.5px;height:11px;background:rgba(127,255,127,0.075);"></div><div style="left:55px;top:355px;width:8.5px;height:11px;background:rgba(255,127,255,0.075);"></div><div style="left:63.5px;top:355px;width:8.5px;height:11px;background:rgba(79,236,236,0.075);"></div><div style="left:72px;top:355px;width:9px;height:11px;background:rgba(255,255,64,0.075);"></div><div style="left:81px;top:355px;width:8.5px;height:11px;background:rgba(127,255,127,0.075);"></div><div style="left:89.5px;top:355px;width:8.5px;height:11px;background:rgba(255,127,255,0.075);"></div><div style="left:98px;top:355px;width:8.5px;height:11px;background:rgba(79,236,236,0.075);"></div><div style="left:106.5px;top:355px;width:8.5px;height:11px;background:rgba(255,255,64,0.075);"></div><div style="left:115px;top:355px;width:8.5px;height:11px;background:rgba(127,255,127,0.075);"></div><div class="t m" style="left:38px;top:354.93px;line-height:11px;height:11px;font-size:7.63px;color:#474847;letter-spacing:-0.306px;">····················</div><div class="t m" style="left:38px;top:354.93px;line-height:11px;height:11px;font-size:7.63px;color:#d4d4d4;letter-spacing:-0.306px;"><span style="color:#d4d4d4">                    </span><span style="color:#808080">&lt;</span><span style="color:#4ec9b0">Chip</span></div><div class="t m" style="left:14.45px;top:354.93px;line-height:11px;height:11px;font-size:7.63px;color:#858585;letter-spacing:-0.306px;">73</div><div style="left:38px;top:366px;width:8.5px;height:10px;background:rgba(255,255,64,0.075);"></div><div style="left:46.5px;top:366px;width:8.5px;height:10px;background:rgba(127,255,127,0.075);"></div><div style="left:55px;top:366px;width:8.5px;height:10px;background:rgba(255,127,255,0.075);"></div><div style="left:63.5px;top:366px;width:8.5px;height:10px;background:rgba(79,236,236,0.075);"></div><div style="left:72px;top:366px;width:9px;height:10px;background:rgba(255,255,64,0.075);"></div><div style="left:81px;top:366px;width:8.5px;height:10px;background:rgba(127,255,127,0.075);"></div><div style="left:89.5px;top:366px;width:8.5px;height:10px;background:rgba(255,127,255,0.075);"></div><div style="left:98px;top:366px;width:8.5px;height:10px;background:rgba(79,236,236,0.075);"></div><div style="left:106.5px;top:366px;width:8.5px;height:10px;background:rgba(255,255,64,0.075);"></div><div style="left:115px;top:366px;width:8.5px;height:10px;background:rgba(127,255,127,0.075);"></div><div style="left:123.5px;top:366px;width:8.5px;height:10px;background:rgba(255,127,255,0.075);"></div><div style="left:132px;top:366px;width:8.5px;height:10px;background:rgba(79,236,236,0.075);"></div><div class="t m" style="left:38px;top:365.49px;line-height:11px;height:11px;font-size:7.63px;color:#474847;letter-spacing:-0.306px;">························</div><div class="t m" style="left:38px;top:365.49px;line-height:11px;height:11px;font-size:7.63px;color:#d4d4d4;letter-spacing:-0.306px;"><span style="color:#9cdcfe">                        variant</span><span style="color:#d4d4d4">=</span><span style="color:#ce9178">"outlined"</span></div><div class="t m" style="left:14.45px;top:365.49px;line-height:11px;height:11px;font-size:7.63px;color:#858585;letter-spacing:-0.306px;">74</div><div style="left:38px;top:376px;width:8.5px;height:11px;background:rgba(255,255,64,0.075);"></div><div style="left:46.5px;top:376px;width:8.5px;height:11px;background:rgba(127,255,127,0.075);"></div><div style="left:55px;top:376px;width:8.5px;height:11px;background:rgba(255,127,255,0.075);"></div><div style="left:63.5px;top:376px;width:8.5px;height:11px;background:rgba(79,236,236,0.075);"></div><div style="left:72px;top:376px;width:9px;height:11px;background:rgba(255,255,64,0.075);"></div><div style="left:81px;top:376px;width:8.5px;height:11px;background:rgba(127,255,127,0.075);"></div><div style="left:89.5px;top:376px;width:8.5px;height:11px;background:rgba(255,127,255,0.075);"></div><div style="left:98px;top:376px;width:8.5px;height:11px;background:rgba(79,236,236,0.075);"></div><div style="left:106.5px;top:376px;width:8.5px;height:11px;background:rgba(255,255,64,0.075);"></div><div style="left:115px;top:376px;width:8.5px;height:11px;background:rgba(127,255,127,0.075);"></div><div style="left:123.5px;top:376px;width:8.5px;height:11px;background:rgba(255,127,255,0.075);"></div><div style="left:132px;top:376px;width:8.5px;height:11px;background:rgba(79,236,236,0.075);"></div><div class="t m" style="left:38px;top:376.05px;line-height:11px;height:11px;font-size:7.63px;color:#474847;letter-spacing:-0.306px;">························</div><div class="t m" style="left:38px;top:376.05px;line-height:11px;height:11px;font-size:7.63px;color:#d4d4d4;letter-spacing:-0.306px;"><span style="color:#d4d4d4">                        </span><span style="color:#87cefa">{</span><span style="color:#d4d4d4">...</span><span style="color:#9cdcfe">previewChipProps</span><span style="color:#87cefa">}</span></div><div class="t m" style="left:14.45px;top:376.05px;line-height:11px;height:11px;font-size:7.63px;color:#858585;letter-spacing:-0.306px;">75</div><div style="left:38px;top:387px;width:8.5px;height:10px;background:rgba(255,255,64,0.075);"></div><div style="left:46.5px;top:387px;width:8.5px;height:10px;background:rgba(127,255,127,0.075);"></div><div style="left:55px;top:387px;width:8.5px;height:10px;background:rgba(255,127,255,0.075);"></div><div style="left:63.5px;top:387px;width:8.5px;height:10px;background:rgba(79,236,236,0.075);"></div><div style="left:72px;top:387px;width:9px;height:10px;background:rgba(255,255,64,0.075);"></div><div style="left:81px;top:387px;width:8.5px;height:10px;background:rgba(127,255,127,0.075);"></div><div style="left:89.5px;top:387px;width:8.5px;height:10px;background:rgba(255,127,255,0.075);"></div><div style="left:98px;top:387px;width:8.5px;height:10px;background:rgba(79,236,236,0.075);"></div><div style="left:106.5px;top:387px;width:8.5px;height:10px;background:rgba(255,255,64,0.075);"></div><div style="left:115px;top:387px;width:8.5px;height:10px;background:rgba(127,255,127,0.075);"></div><div style="left:123.5px;top:387px;width:8.5px;height:10px;background:rgba(255,127,255,0.075);"></div><div style="left:132px;top:387px;width:8.5px;height:10px;background:rgba(79,236,236,0.075);"></div><div class="t m" style="left:38px;top:386.60px;line-height:11px;height:11px;font-size:7.63px;color:#474847;letter-spacing:-0.306px;">························</div><div class="t m" style="left:38px;top:386.60px;line-height:11px;height:11px;font-size:7.63px;color:#d4d4d4;letter-spacing:-0.306px;"><span style="color:#9cdcfe">                        label</span><span style="color:#d4d4d4">=</span><span style="color:#87cefa">{</span><span style="color:#9cdcfe">fileObject</span><span style="color:#d4d4d4">.</span><span style="color:#9cdcfe">file</span><span style="color:#d4d4d4">.</span><span style="color:#9cdcfe">name</span><span style="color:#87cefa">}</span></div><div class="t m" style="left:14.45px;top:386.60px;line-height:11px;height:11px;font-size:7.63px;color:#858585;letter-spacing:-0.306px;">76</div><div style="left:38px;top:397px;width:8.5px;height:11px;background:rgba(255,255,64,0.075);"></div><div style="left:46.5px;top:397px;width:8.5px;height:11px;background:rgba(127,255,127,0.075);"></div><div style="left:55px;top:397px;width:8.5px;height:11px;background:rgba(255,127,255,0.075);"></div><div style="left:63.5px;top:397px;width:8.5px;height:11px;background:rgba(79,236,236,0.075);"></div><div style="left:72px;top:397px;width:9px;height:11px;background:rgba(255,255,64,0.075);"></div><div style="left:81px;top:397px;width:8.5px;height:11px;background:rgba(127,255,127,0.075);"></div><div style="left:89.5px;top:397px;width:8.5px;height:11px;background:rgba(255,127,255,0.075);"></div><div style="left:98px;top:397px;width:8.5px;height:11px;background:rgba(79,236,236,0.075);"></div><div style="left:106.5px;top:397px;width:8.5px;height:11px;background:rgba(255,255,64,0.075);"></div><div style="left:115px;top:397px;width:8.5px;height:11px;background:rgba(127,255,127,0.075);"></div><div style="left:123.5px;top:397px;width:8.5px;height:11px;background:rgba(255,127,255,0.075);"></div><div style="left:132px;top:397px;width:8.5px;height:11px;background:rgba(79,236,236,0.075);"></div><div class="t m" style="left:38px;top:397.16px;line-height:11px;height:11px;font-size:7.63px;color:#474847;letter-spacing:-0.306px;">························</div><div class="t m" style="left:38px;top:397.16px;line-height:11px;height:11px;font-size:7.63px;color:#d4d4d4;letter-spacing:-0.306px;"><span style="color:#9cdcfe">                        onDelete</span><span style="color:#d4d4d4">=</span><span style="color:#87cefa">{</span><span style="color:#dcdcaa">handleRemove</span><span style="color:#f0cd20">(</span><span style="color:#9cdcfe">i</span><span style="color:#f0cd20">)</span><span style="color:#87cefa">}</span></div><div class="t m" style="left:14.45px;top:397.16px;line-height:11px;height:11px;font-size:7.63px;color:#858585;letter-spacing:-0.306px;">77</div><div style="left:38px;top:408px;width:8.5px;height:11px;background:rgba(255,255,64,0.075);"></div><div style="left:46.5px;top:408px;width:8.5px;height:11px;background:rgba(127,255,127,0.075);"></div><div style="left:55px;top:408px;width:8.5px;height:11px;background:rgba(255,127,255,0.075);"></div><div style="left:63.5px;top:408px;width:8.5px;height:11px;background:rgba(79,236,236,0.075);"></div><div style="left:72px;top:408px;width:9px;height:11px;background:rgba(255,255,64,0.075);"></div><div style="left:81px;top:408px;width:8.5px;height:11px;background:rgba(127,255,127,0.075);"></div><div style="left:89.5px;top:408px;width:8.5px;height:11px;background:rgba(255,127,255,0.075);"></div><div style="left:98px;top:408px;width:8.5px;height:11px;background:rgba(79,236,236,0.075);"></div><div style="left:106.5px;top:408px;width:8.5px;height:11px;background:rgba(255,255,64,0.075);"></div><div style="left:115px;top:408px;width:8.5px;height:11px;background:rgba(127,255,127,0.075);"></div><div class="t m" style="left:38px;top:407.71px;line-height:11px;height:11px;font-size:7.63px;color:#474847;letter-spacing:-0.306px;">····················</div><div class="t m" style="left:38px;top:407.71px;line-height:11px;height:11px;font-size:7.63px;color:#d4d4d4;letter-spacing:-0.306px;"><span style="color:#d4d4d4">                    </span><span style="color:#808080">/&gt;</span></div><div class="t m" style="left:14.45px;top:407.71px;line-height:11px;height:11px;font-size:7.63px;color:#858585;letter-spacing:-0.306px;">78</div><div style="left:38px;top:419px;width:8.5px;height:10px;background:rgba(255,255,64,0.075);"></div><div style="left:46.5px;top:419px;width:8.5px;height:10px;background:rgba(127,255,127,0.075);"></div><div style="left:55px;top:419px;width:8.5px;height:10px;background:rgba(255,127,255,0.075);"></div><div style="left:63.5px;top:419px;width:8.5px;height:10px;background:rgba(79,236,236,0.075);"></div><div style="left:72px;top:419px;width:9px;height:10px;background:rgba(255,255,64,0.075);"></div><div style="left:81px;top:419px;width:8.5px;height:10px;background:rgba(127,255,127,0.075);"></div><div style="left:89.5px;top:419px;width:8.5px;height:10px;background:rgba(255,127,255,0.075);"></div><div style="left:98px;top:419px;width:8.5px;height:10px;background:rgba(79,236,236,0.075);"></div><div class="t m" style="left:38px;top:418.27px;line-height:11px;height:11px;font-size:7.63px;color:#474847;letter-spacing:-0.306px;">················</div><div class="t m" style="left:38px;top:418.27px;line-height:11px;height:11px;font-size:7.63px;color:#d4d4d4;letter-spacing:-0.306px;"><span style="color:#d4d4d4">                </span><span style="color:#808080">&lt;/</span><span style="color:#569cd6">div</span><span style="color:#808080">&gt;</span></div><div class="t m" style="left:14.45px;top:418.27px;line-height:11px;height:11px;font-size:7.63px;color:#858585;letter-spacing:-0.306px;">79</div><div style="left:38px;top:429px;width:8.5px;height:11px;background:rgba(255,255,64,0.075);"></div><div style="left:46.5px;top:429px;width:8.5px;height:11px;background:rgba(127,255,127,0.075);"></div><div style="left:55px;top:429px;width:8.5px;height:11px;background:rgba(255,127,255,0.075);"></div><div style="left:63.5px;top:429px;width:8.5px;height:11px;background:rgba(79,236,236,0.075);"></div><div style="left:72px;top:429px;width:9px;height:11px;background:rgba(255,255,64,0.075);"></div><div style="left:81px;top:429px;width:8.5px;height:11px;background:rgba(127,255,127,0.075);"></div><div class="t m" style="left:38px;top:428.82px;line-height:11px;height:11px;font-size:7.63px;color:#474847;letter-spacing:-0.306px;">············</div><div class="t m" style="left:38px;top:428.82px;line-height:11px;height:11px;font-size:7.63px;color:#d4d4d4;letter-spacing:-0.306px;"><span style="color:#d4d4d4">            </span><span style="color:#87cefa">)</span><span style="color:#da70d6">)</span></div><div class="t m" style="left:14.45px;top:428.82px;line-height:11px;height:11px;font-size:7.63px;color:#858585;letter-spacing:-0.306px;">80</div><div style="left:38px;top:440px;width:8.5px;height:10px;background:rgba(255,255,64,0.075);"></div><div style="left:46.5px;top:440px;width:8.5px;height:10px;background:rgba(127,255,127,0.075);"></div><div style="left:55px;top:440px;width:8.5px;height:10px;background:rgba(255,127,255,0.075);"></div><div style="left:63.5px;top:440px;width:8.5px;height:10px;background:rgba(79,236,236,0.075);"></div><div class="t m" style="left:38px;top:439.38px;line-height:11px;height:11px;font-size:7.63px;color:#474847;letter-spacing:-0.306px;">········</div><div class="t m" style="left:38px;top:439.38px;line-height:11px;height:11px;font-size:7.63px;color:#d4d4d4;letter-spacing:-0.306px;"><span style="color:#d4d4d4">        </span><span style="color:#f0cd20">)</span><span style="color:#d4d4d4">;</span></div><div class="t m" style="left:14.45px;top:439.38px;line-height:11px;height:11px;font-size:7.63px;color:#858585;letter-spacing:-0.306px;">81</div><div style="left:38px;top:165.256px;width:390px;height:10.5556px;border-top:1px solid #2c2c2c;border-bottom:1px solid #2c2c2c;box-sizing:border-box;"></div><div style="left:127.475px;top:113.156px;width:4.875px;height:9.2px;border:0.7px solid #888;box-sizing:border-box;"></div><div style="left:37.7px;top:260.934px;width:4.875px;height:9.2px;border:0.7px solid #888;box-sizing:border-box;"></div><div style="left:27.6px;top:249.701px;width:1.7px;height:10.5556px;background:#7f9c1e;"></div><div style="left:27.6px;top:281.368px;width:1.7px;height:10.5556px;background:#1b9aaa;"></div><svg style="position:absolute;left:27.4px;top:268.812px;" width="3" height="4" viewBox="0 0 3 4"><path d="M0 0L2.6 2L0 4Z" fill="#a31515"/></svg><svg style="position:absolute;left:27.4px;top:300.479px;" width="3" height="4" viewBox="0 0 3 4"><path d="M0 0L2.6 2L0 4Z" fill="#a31515"/></svg><svg style="position:absolute;left:27.4px;top:311.035px;" width="3" height="4" viewBox="0 0 3 4"><path d="M0 0L2.6 2L0 4Z" fill="#a31515"/></svg><div style="left:38px;top:437.5px;width:316px;height:5.5px;background:rgba(121,121,121,0.40);"></div><div style="left:428px;top:0px;width:0.8px;height:443px;background:#2a2a2a;"></div><div style="left:430px;top:87px;width:8px;height:91.5px;background:rgba(121,121,121,0.38);"></div><div style="left:430px;top:121.6px;width:8px;height:0.9px;background:#6a6a6a;"></div><div style="left:430px;top:139px;width:1.6px;height:12px;background:#7a5a1e;"></div><div style="left:434px;top:4.5px;width:4px;height:6px;background:#e51400;"></div><div style="left:434px;top:16px;width:4px;height:2.4px;background:#7cc1f0;"></div><div style="left:434px;top:28px;width:4px;height:2.2px;background:#c4392d;"></div><div style="left:434px;top:33.5px;width:4px;height:2.4px;background:#9ad0f5;"></div><div style="left:434px;top:188.5px;width:4px;height:2.4px;background:#8fc8ee;"></div><div style="left:434px;top:208px;width:4px;height:2.4px;background:#8fc8ee;"></div><div style="left:434px;top:311px;width:4px;height:2.4px;background:#58a6e0;"></div><div style="left:434px;top:322px;width:4px;height:2.8px;background:#8fc8ee;"></div></div>
<div style="left:1032px;top:48px;width:232px;height:18px;background:#252526;box-shadow:0 1px 4px rgba(0,0,0,.7);"></div>
<div style="left:1032px;top:48px;width:1.6px;height:18px;background:#3e3e3e;"></div>
<svg style="position:absolute;left:1034.5px;top:53.5px;" width="7" height="7" viewBox="0 0 7 7"><path d="M2.4 1L4.9 3.5L2.4 6" fill="none" stroke="#c5c5c5" stroke-width=".9"/></svg>
<div style="left:1043px;top:50.8px;width:128px;height:13.4px;background:#3c3c3c;"></div>
<div class="t" style="left:1046px;top:52.50px;line-height:10px;height:10px;font-size:7.00px;letter-spacing:0.085px;color:#cccccc;">defaultGetCols</div>
<div class="t" style="left:1136px;top:52.60px;line-height:10px;height:10px;font-size:6.40px;color:#b8b8b8;">Aa</div>
<svg style="position:absolute;left:1147.5px;top:53.5px;" width="8.5" height="8" viewBox="0 0 8.5 8"><rect x=".5" y=".5" width="7.5" height="7" fill="#4a4a4a" stroke="#b8b8b8" stroke-width=".6"/></svg>
<div class="t" style="left:1148.6px;top:53.40px;line-height:8px;height:8px;font-size:5.00px;font-weight:bold;color:#c8c8c8;text-decoration:underline;">Ab</div>
<svg style="position:absolute;left:1160px;top:53.5px;" width="8" height="8" viewBox="0 0 8 8"><rect x="1" y="5" width="2" height="2" fill="#c8c8c8"/><path d="M5.6 0.8V4.6M3.9 1.8L7.3 3.6M7.3 1.8L3.9 3.6" stroke="#c8c8c8" stroke-width=".8"/></svg>
<div class="t" style="left:1173.5px;top:52.50px;line-height:10px;height:10px;font-size:7.00px;letter-spacing:-0.151px;color:#f48771;">No results</div>
<svg style="position:absolute;left:1215.5px;top:53.5px;" width="7" height="8" viewBox="0 0 7 8"><path d="M3.5 7.4V1M1 3.4L3.5 0.9L6 3.4" fill="none" stroke="#5f5f5f" stroke-width=".85"/></svg>
<svg style="position:absolute;left:1228px;top:53.5px;" width="7" height="8" viewBox="0 0 7 8"><path d="M3.5 0.6V7M1 4.6L3.5 7.1L6 4.6" fill="none" stroke="#5f5f5f" stroke-width=".85"/></svg>
<svg style="position:absolute;left:1239.5px;top:53.5px;" width="9" height="8" viewBox="0 0 9 8"><path d="M0.6 1.6H8.4M0.6 4H8.4M0.6 6.4H5.4" stroke="#c5c5c5" stroke-width=".85"/></svg>
<svg style="position:absolute;left:1252.8px;top:53.8px;" width="7" height="7" viewBox="0 0 7 7"><path d="M1 1L6 6M6 1L1 6" stroke="#e0e0e0" stroke-width=".95"/></svg>
<svg style="position:absolute;left:1077.5px;top:350px;" width="8" height="12" viewBox="0 0 8 12"><path d="M1.2 0.8H3Q4 0.8 4 1.8Q4 0.8 5 0.8H6.8M1.2 11.2H3Q4 11.2 4 10.2Q4 11.2 5 11.2H6.8M4 1.6V10.4" fill="none" stroke="#e6e6e6" stroke-width="1.15"/></svg>
<div style="left:842px;top:491px;width:438px;height:191.6px;background:#1e1e1e;"></div>
<div style="left:842px;top:491px;width:438px;height:0.8px;background:#303031;"></div>
<div class="t" style="left:853px;top:497.70px;line-height:9px;height:9px;font-size:5.60px;letter-spacing:-0.015px;color:#9a9a9a;">PROBLEMS</div>
<div style="left:887.5px;top:496.6px;width:12px;height:10px;background:#4d4d4d;border-radius:5px;"></div>
<div class="t" style="left:889.9px;top:497.70px;line-height:9px;height:9px;font-size:6.20px;font-weight:bold;color:#ffffff;">36</div>
<div class="t" style="left:910.5px;top:497.70px;line-height:9px;height:9px;font-size:5.60px;color:#9a9a9a;">OUTPUT</div>
<div class="t" style="left:944.5px;top:497.70px;line-height:9px;height:9px;font-size:5.60px;letter-spacing:-0.104px;color:#9a9a9a;">DEBUG CONSOLE</div>
<div class="t" style="left:1003px;top:497.70px;line-height:9px;height:9px;font-size:5.60px;letter-spacing:0.023px;color:#e7e7e7;">TERMINAL</div>
<div style="left:1003px;top:508.6px;width:28.5px;height:0.9px;background:#e7e7e7;"></div>
<div style="left:1087px;top:494.8px;width:94px;height:13.4px;background:#3c3c3c;"></div>
<div class="t" style="left:1092px;top:496.80px;line-height:10px;height:10px;font-size:7.00px;letter-spacing:0.092px;color:#f0f0f0;">1: node</div>
<svg style="position:absolute;left:1170px;top:498.5px;" width="7" height="7" viewBox="0 0 7 7"><path d="M1.2 2.4L3.5 4.7L5.8 2.4" fill="none" stroke="#c5c5c5" stroke-width=".85"/></svg>
<svg style="position:absolute;left:1189.5px;top:497.5px;" width="8" height="8" viewBox="0 0 8 8"><path d="M4 0.6V7.4M0.6 4H7.4" stroke="#c5c5c5" stroke-width=".95"/></svg>
<svg style="position:absolute;left:1208px;top:497.5px;" width="8" height="8" viewBox="0 0 8 8"><rect x=".8" y=".9" width="6.4" height="6.2" rx=".6" fill="none" stroke="#c5c5c5" stroke-width=".9"/><path d="M4 .9V7.1" stroke="#c5c5c5" stroke-width=".9"/></svg>
<svg style="position:absolute;left:1225.5px;top:497px;" width="8" height="9" viewBox="0 0 8 9"><path d="M0.8 2H7.2M3 2V0.9H5V2M1.6 2L2 8H6L6.4 2" fill="#9d9d9d" stroke="#c5c5c5" stroke-width=".8"/></svg>
<svg style="position:absolute;left:1243.5px;top:498px;" width="8" height="7" viewBox="0 0 8 7"><path d="M1 4.8L4 1.8L7 4.8" fill="none" stroke="#c5c5c5" stroke-width=".95"/></svg>
<svg style="position:absolute;left:1261.5px;top:497.8px;" width="8" height="8" viewBox="0 0 8 8"><path d="M1.2 1.2L6.8 6.8M6.8 1.2L1.2 6.8" stroke="#c5c5c5" stroke-width=".95"/></svg>
<svg style="position:absolute;left:1261px;top:523px;" width="9" height="8" viewBox="0 0 9 8"><path d="M4.5 0.9L8.3 7.3H0.7Z" fill="none" stroke="#5c5c5c" stroke-width=".85" stroke-linejoin="round"/><path d="M4.5 3.2V5.2M4.5 5.9V6.5" stroke="#5c5c5c" stroke-width=".75"/></svg>
<div style="left:853px;top:519.8px;width:24.3px;height:10.2px;background:#2bc48a;"></div>
<div class="t m" style="left:857px;top:519.00px;line-height:11px;height:11px;font-size:7.14px;color:#1f9d6c;letter-spacing:-0.286px;">DONE</div>
<div class="t m" style="left:881.2px;top:519.30px;line-height:11px;height:11px;font-size:7.14px;color:#dedede;letter-spacing:-0.286px;">Compiled successfully!</div>
<div style="left:853px;top:539.79px;width:24.3px;height:10.2px;background:#2bc48a;"></div>
<div class="t m" style="left:857px;top:538.99px;line-height:11px;height:11px;font-size:7.14px;color:#1f9d6c;letter-spacing:-0.286px;">DONE</div>
<div class="t m" style="left:881.2px;top:539.29px;line-height:11px;height:11px;font-size:7.14px;color:#dedede;letter-spacing:-0.286px;">Compiled successfully!</div>
<div style="left:853px;top:559.78px;width:24.3px;height:10.2px;background:#2bc48a;"></div>
<div class="t m" style="left:857px;top:558.98px;line-height:11px;height:11px;font-size:7.14px;color:#1f9d6c;letter-spacing:-0.286px;">DONE</div>
<div class="t m" style="left:881.2px;top:559.28px;line-height:11px;height:11px;font-size:7.14px;color:#dedede;letter-spacing:-0.286px;">Compiled successfully!</div>
<div style="left:853px;top:579.77px;width:24.3px;height:10.2px;background:#2bc48a;"></div>
<div class="t m" style="left:857px;top:578.97px;line-height:11px;height:11px;font-size:7.14px;color:#1f9d6c;letter-spacing:-0.286px;">DONE</div>
<div class="t m" style="left:881.2px;top:579.27px;line-height:11px;height:11px;font-size:7.14px;color:#dedede;letter-spacing:-0.286px;">Compiled successfully!</div>
<div style="left:853px;top:599.76px;width:24.3px;height:10.2px;background:#2bc48a;"></div>
<div class="t m" style="left:857px;top:598.96px;line-height:11px;height:11px;font-size:7.14px;color:#1f9d6c;letter-spacing:-0.286px;">DONE</div>
<div class="t m" style="left:881.2px;top:599.26px;line-height:11px;height:11px;font-size:7.14px;color:#dedede;letter-spacing:-0.286px;">Compiled successfully!</div>
<div style="left:853px;top:619.75px;width:24.3px;height:10.2px;background:#2bc48a;"></div>
<div class="t m" style="left:857px;top:618.95px;line-height:11px;height:11px;font-size:7.14px;color:#1f9d6c;letter-spacing:-0.286px;">DONE</div>
<div class="t m" style="left:881.2px;top:619.25px;line-height:11px;height:11px;font-size:7.14px;color:#dedede;letter-spacing:-0.286px;">Compiled successfully!</div>
<div style="left:853px;top:639.74px;width:24.3px;height:10.2px;background:#2bc48a;"></div>
<div class="t m" style="left:857px;top:638.94px;line-height:11px;height:11px;font-size:7.14px;color:#1f9d6c;letter-spacing:-0.286px;">DONE</div>
<div class="t m" style="left:881.2px;top:639.24px;line-height:11px;height:11px;font-size:7.14px;color:#dedede;letter-spacing:-0.286px;">Compiled successfully!</div>
<div style="left:853px;top:659.73px;width:24.3px;height:10.2px;background:#2bc48a;"></div>
<div class="t m" style="left:857px;top:658.93px;line-height:11px;height:11px;font-size:7.14px;color:#1f9d6c;letter-spacing:-0.286px;">DONE</div>
<div class="t m" style="left:881.2px;top:659.23px;line-height:11px;height:11px;font-size:7.14px;color:#dedede;letter-spacing:-0.286px;">Compiled successfully!</div>
<div style="left:853px;top:669.8px;width:4px;height:10px;border:0.8px solid #c8c8c8;box-sizing:border-box;"></div>
<div style="left:640px;top:681.6px;width:640px;height:11.7px;background:#0a7aca;"></div>
<svg style="position:absolute;left:646px;top:683px;" width="8" height="9.5" viewBox="0 0 8 9.5"><circle cx="2.2" cy="1.9" r="1.15" fill="none" stroke="#ffffff" stroke-width=".8"/><circle cx="2.2" cy="7.6" r="1.15" fill="none" stroke="#ffffff" stroke-width=".8"/><circle cx="6" cy="3" r="1.15" fill="none" stroke="#ffffff" stroke-width=".8"/><path d="M2.2 3.1V6.4M6 4.2Q5.8 5.6 2.6 6.2" fill="none" stroke="#ffffff" stroke-width=".8"/></svg>
<div class="t" style="left:658px;top:682.70px;line-height:10px;height:10px;font-size:6.70px;letter-spacing:-0.008px;color:#ffffff;">improve-preivew-166*</div>
<svg style="position:absolute;left:732.5px;top:684px;" width="8" height="8" viewBox="0 0 8 8"><path d="M6.6 2.6A3 3 0 0 0 1.2 3.4M1.4 5.4A3 3 0 0 0 6.8 4.6" fill="none" stroke="#ffffff" stroke-width=".8"/><path d="M7 1V3H5ZM1 7V5H3Z" fill="#ffffff"/></svg>
<div class="t" style="left:742px;top:682.70px;line-height:10px;height:10px;font-size:6.70px;letter-spacing:-0.103px;color:#ffffff;">0↓ 1↑</div>
<svg style="position:absolute;left:765.5px;top:684px;" width="8" height="8" viewBox="0 0 8 8"><circle cx="4" cy="4" r="3.1" fill="none" stroke="#ffffff" stroke-width=".75"/><path d="M2.8 2.8L5.2 5.2M5.2 2.8L2.8 5.2" stroke="#ffffff" stroke-width=".7"/></svg>
<div class="t" style="left:776px;top:682.70px;line-height:10px;height:10px;font-size:6.70px;color:#ffffff;">7</div>
<svg style="position:absolute;left:781px;top:684px;" width="8" height="8" viewBox="0 0 8 8"><path d="M4 1L7.3 6.8H0.7Z" fill="none" stroke="#ffffff" stroke-width=".75" stroke-linejoin="round"/><path d="M4 3V4.8M4 5.4V6" stroke="#ffffff" stroke-width=".65"/></svg>
<div class="t" style="left:791.6px;top:682.70px;line-height:10px;height:10px;font-size:6.70px;color:#ffffff;">0</div>
<svg style="position:absolute;left:796.5px;top:684px;" width="8" height="8" viewBox="0 0 8 8"><circle cx="4" cy="4" r="3.1" fill="none" stroke="#ffffff" stroke-width=".75"/><path d="M4 3.6V5.8M4 2.2V2.9" stroke="#ffffff" stroke-width=".75"/></svg>
<div class="t" style="left:806.3px;top:682.70px;line-height:10px;height:10px;font-size:6.70px;color:#ffffff;">29</div>
<div class="t" style="left:822px;top:682.70px;line-height:10px;height:10px;font-size:6.70px;letter-spacing:-0.193px;color:#ffffff;">{..} : 17</div>
<svg style="position:absolute;left:850.5px;top:684.4px;" width="7" height="7" viewBox="0 0 7 7"><path d="M0.8 3.8L2.6 5.6L6.2 1.2" fill="none" stroke="#ffffff" stroke-width=".9"/></svg>
<div class="t" style="left:860px;top:682.70px;line-height:10px;height:10px;font-size:6.70px;letter-spacing:-0.033px;color:#ffffff;">javascript |</div>
<svg style="position:absolute;left:894px;top:684.4px;" width="7" height="7" viewBox="0 0 7 7"><path d="M0.8 3.8L2.6 5.6L6.2 1.2" fill="none" stroke="#ffffff" stroke-width=".9"/></svg>
<div class="t" style="left:902.5px;top:682.70px;line-height:10px;height:10px;font-size:6.70px;letter-spacing:-0.211px;color:#ffffff;">PreviewList.js</div>
<div class="t" style="left:1050px;top:682.70px;line-height:10px;height:10px;font-size:6.70px;letter-spacing:-0.143px;color:#ffffff;">Ln 55, Col 16</div>
<div class="t" style="left:1097px;top:682.70px;line-height:10px;height:10px;font-size:6.70px;letter-spacing:-0.255px;color:#ffffff;">Spaces: 2</div>
<div class="t" style="left:1133px;top:682.70px;line-height:10px;height:10px;font-size:6.70px;letter-spacing:-0.196px;color:#ffffff;">UTF-8</div>
<div class="t" style="left:1159.5px;top:682.70px;line-height:10px;height:10px;font-size:6.70px;letter-spacing:-0.874px;color:#ffffff;">CRLF</div>
<div class="t" style="left:1183px;top:682.70px;line-height:10px;height:10px;font-size:6.70px;letter-spacing:-0.178px;color:#ffffff;">JavaScript</div>
<div class="t" style="left:1221px;top:682.70px;line-height:10px;height:10px;font-size:6.70px;letter-spacing:-0.290px;color:#ffffff;">ESLint</div>
<svg style="position:absolute;left:1247px;top:684px;" width="8" height="8" viewBox="0 0 8 8"><path d="M1.4 1.4H6.8V4.6H4.2L2.6 6V4.6H1.4Z" fill="none" stroke="#ffffff" stroke-width=".75" stroke-linejoin="round"/><circle cx="2.2" cy="6.4" r=".9" fill="none" stroke="#ffffff" stroke-width=".6"/></svg>
<svg style="position:absolute;left:1264px;top:684px;" width="8" height="8" viewBox="0 0 8 8"><path d="M1.4 5.8Q2.2 5 2.2 3.4Q2.4 1.4 4 1.4Q5.6 1.4 5.8 3.4Q5.8 5 6.6 5.8Z" fill="none" stroke="#ffffff" stroke-width=".75" stroke-linejoin="round"/><path d="M3.3 6.7H4.7" stroke="#ffffff" stroke-width=".75"/></svg>
<div style="left:0px;top:693px;width:1280px;height:27px;background:linear-gradient(90deg,#2d3b47 0%,#2f3d48 45%,#37444d 70%,#3c4850 100%);"></div>
<svg style="position:absolute;left:10.5px;top:701px;" width="11" height="11" viewBox="0 0 11 11"><path d="M0.4 1.8L4.8 1.2V5.2H0.4ZM5.5 1.1L10.6 0.4V5.2H5.5ZM0.4 5.9H4.8V9.9L0.4 9.3ZM5.5 5.9H10.6V10.7L5.5 10Z" fill="#ffffff"/></svg>
<svg style="position:absolute;left:42px;top:701px;" width="11" height="11" viewBox="0 0 11 11"><circle cx="6.6" cy="4.4" r="3.3" fill="none" stroke="#fff" stroke-width="1"/><path d="M4.3 6.8L0.8 10.4" stroke="#fff" stroke-width="1.1"/></svg>
<svg style="position:absolute;left:74.5px;top:701px;" width="11" height="11" viewBox="0 0 11 11"><circle cx="5.5" cy="5.5" r="4.2" fill="none" stroke="#fff" stroke-width="1.2"/></svg>
<svg style="position:absolute;left:107px;top:699px;" width="14" height="15" viewBox="0 0 14 15"><path d="M1.6 1.6Q6 6 8.6 13.4" fill="none" stroke="#d8322c" stroke-width="2.1"/><path d="M1.6 13.4Q5 8 9.8 2.6" fill="none" stroke="#3fae49" stroke-width="2.1"/><path d="M7.4 1.4L11.6 0.8L10.8 5Z" fill="#3fae49"/><circle cx="10.8" cy="11.6" r="2.1" fill="#f28a86" stroke="#d8322c" stroke-width=".6"/></svg>
<svg style="position:absolute;left:139px;top:700px;" width="14" height="13" viewBox="0 0 14 13"><path d="M0.6 1.2H5L6.2 2.6H13.4V11.8H0.6Z" fill="#f3c23c"/><path d="M0.6 4H13.4V11.8H0.6Z" fill="#fbd866"/><path d="M3.6 7.4H10.4V11.8H3.6Z" fill="#3a8fd6"/><path d="M5.4 9H8.6V11.8H5.4Z" fill="#f5d15a"/></svg>
<svg style="position:absolute;left:172px;top:699.5px;" width="14" height="14" viewBox="0 0 14 14"><path d="M1.4 2.4Q6 6.4 9 13M1.4 12.6Q5.4 8 9 2.6" fill="none" stroke="#f4f8ec" stroke-width="3"/><path d="M1.4 2.4Q6 6.4 9 13M1.4 12.6Q5.4 8 9 2.6" fill="none" stroke="#4e9a2e" stroke-width="1.7"/><circle cx="10.6" cy="3.6" r="2.6" fill="#f4f8ec" stroke="#4e9a2e" stroke-width="1.1"/></svg>
<svg style="position:absolute;left:204.5px;top:699.5px;" width="15" height="14" viewBox="0 0 15 14"><rect x="0.6" y="0.6" width="10.6" height="9" fill="#14242c" stroke="#2f6f7c" stroke-width=".6"/><rect x="3" y="3" width="6" height="4" fill="none" stroke="#e8f0f2" stroke-width=".9"/><rect x="6.2" y="7.2" width="8.2" height="6" fill="#0b0b0b" stroke="#cfcfcf" stroke-width=".7"/><path d="M7.6 9.4L8.8 10.4L7.6 11.4M9.6 11.6H11.6" fill="none" stroke="#fff" stroke-width=".6"/></svg>
<svg style="position:absolute;left:238px;top:699.5px;" width="14" height="14" viewBox="0 0 14 14"><path d="M10 0.8L13.2 2.2V11.8L10 13.2L3 7Z" fill="#2a9df4"/><path d="M10 0.8L4.4 5.8L2 3.9L0.8 4.5V9.5L2 10.1L4.4 8.2L10 13.2V9.6L6.6 7L10 4.4Z" fill="#1279c4"/><path d="M10 4.2V9.8L6.4 7Z" fill="#2c3a46"/></svg>
<svg style="position:absolute;left:270px;top:699.5px;" width="14" height="14" viewBox="0 0 14 14"><circle cx="7" cy="7" r="6.4" fill="#e8453c"/><path d="M7 7L1.5 3.8A6.4 6.4 0 0 0 6 13.3Z" fill="#2fa84f"/><path d="M7 7L6 13.3A6.4 6.4 0 0 0 12.6 3.9Z" fill="#f9c12e"/><path d="M12.6 3.9H7L1.5 3.8A6.4 6.4 0 0 1 12.6 3.9Z" fill="#e8453c"/><circle cx="7" cy="7" r="3" fill="#fff"/><circle cx="7" cy="7" r="2.3" fill="#4a8af4"/></svg>
<svg style="position:absolute;left:303px;top:699.5px;" width="14" height="14" viewBox="0 0 14 14"><path d="M10 0.8L13.4 2.2V11.8L10 13.2L4.6 8.6L1.8 10.8L0.6 10.2V3.8L1.8 3.2L4.6 5.4Z" fill="#8a56d6"/><path d="M10 4.4V9.6L6.8 7Z M2 5.4V8.6L3.6 7Z" fill="#2c3a46"/></svg>
<svg style="position:absolute;left:335px;top:699.5px;" width="14" height="14" viewBox="0 0 14 14"><rect x="0.6" y="0.6" width="12.8" height="12.8" rx="1.6" fill="#4a4a4a"/><path d="M3.4 5L10.6 2.8V5.2L5.8 6.8L10.6 8.6V11L3.4 8.8V6.6L8 5.2Z" fill="#ff9a1f"/></svg>
<svg style="position:absolute;left:367.5px;top:699px;" width="15" height="15" viewBox="0 0 15 15"><path d="M1.6 13.6Q0.4 7 3.4 3Q7.5 -0.6 11.6 3Q14.6 7 13.4 13.6Z" fill="#8d9499"/><circle cx="7.5" cy="7" r="5.2" fill="#f4f4f4"/><path d="M7.5 7L5 4.4M7.5 7L10.2 4.8" stroke="#222" stroke-width="1"/><path d="M7.5 7V11.4" stroke="#d22" stroke-width=".9"/></svg>
<svg style="position:absolute;left:400px;top:699.5px;" width="14" height="14" viewBox="0 0 14 14"><path d="M7 0.8L13 3.8V10.2L7 13.2L1 10.2V3.8Z" fill="#1d3d77"/><path d="M7 0.8L13 3.8L7 6.8L1 3.8Z" fill="#dfe8f4"/><path d="M7 6.8V13.2L1 10.2V3.8Z" fill="#2b549c"/><path d="M3 6.4L5.2 7.6V10.6L3 9.4Z M8.8 7.6L11 6.4V9.4L8.8 10.6Z" fill="#dfe8f4"/></svg>
<svg style="position:absolute;left:432.5px;top:699.5px;" width="14" height="14" viewBox="0 0 14 14"><path d="M7 0.8L13 3.8V10.2L7 13.2L1 10.2V3.8Z" fill="#1d3d77"/><path d="M7 0.8L13 3.8L7 6.8L1 3.8Z" fill="#dfe8f4"/><path d="M7 6.8V13.2L1 10.2V3.8Z" fill="#2b549c"/><path d="M3 6.4L5.2 7.6V10.6L3 9.4Z M8.8 7.6L11 6.4V9.4L8.8 10.6Z" fill="#dfe8f4"/></svg>
<svg style="position:absolute;left:465.5px;top:701px;" width="16" height="11" viewBox="0 0 16 11"><rect x="0.5" y="0.5" width="15" height="10" fill="#6b2fa0" stroke="#8a4cc0" stroke-width=".6"/><path d="M2 3.4L3.6 2.4L5 3.8L6.4 3" fill="none" stroke="#d9b8f0" stroke-width=".6"/></svg>
<svg style="position:absolute;left:497.5px;top:699px;" width="18" height="15" viewBox="0 0 18 15"><path d="M1 4.6L7.6 0.8L14.2 4.6V12H1Z" fill="#1d6fc0"/><path d="M1 5H14.2V12H1Z" fill="#3aa0ee"/><path d="M1 5L7.6 9L14.2 5" fill="none" stroke="#bfe0fa" stroke-width=".7"/><circle cx="14" cy="10.6" r="4.9" fill="#2b2f33" stroke="#c8c8c8" stroke-width=".7"/></svg>
<div class="t" style="left:507.6px;top:704.70px;line-height:10px;height:10px;font-size:6.80px;font-weight:bold;color:#fff;letter-spacing:-0.3px;">20</div>
<svg style="position:absolute;left:532px;top:699.5px;" width="14" height="14" viewBox="0 0 14 14"><circle cx="7" cy="7" r="6.5" fill="#1ed760"/><path d="M3.4 5.2Q7 4 10.8 5.8M3.8 7.4Q7 6.4 10.2 8M4.4 9.4Q7 8.6 9.6 9.8" fill="none" stroke="#14361f" stroke-width="1.1" stroke-linecap="round"/></svg>
<svg style="position:absolute;left:564px;top:699.5px;" width="14" height="14" viewBox="0 0 14 14"><circle cx="7" cy="7" r="6.4" fill="#e8453c"/><path d="M7 7L1.5 3.8A6.4 6.4 0 0 0 6 13.3Z" fill="#2fa84f"/><path d="M7 7L6 13.3A6.4 6.4 0 0 0 12.6 3.9Z" fill="#f9c12e"/><path d="M12.6 3.9H7L1.5 3.8A6.4 6.4 0 0 1 12.6 3.9Z" fill="#e8453c"/><circle cx="7" cy="7" r="3" fill="#fff"/><circle cx="7" cy="7" r="2.3" fill="#4a8af4"/></svg>
<svg style="position:absolute;left:597px;top:699.5px;" width="14" height="14" viewBox="0 0 14 14"><path d="M7 0.8A6.2 6.2 0 1 1 3.8 12.3L0.8 13.2L1.8 10.3A6.2 6.2 0 0 1 7 0.8Z" fill="#fff"/><circle cx="7" cy="7" r="5.2" fill="#2cb742"/><path d="M4.8 4.4Q4.2 7.4 8.6 9.6L9.8 8.6L8.6 7.8L8 8.2Q6.6 7.6 6 6L6.4 5.4L5.6 4.2Z" fill="#fff"/></svg>
<svg style="position:absolute;left:629px;top:699.5px;" width="14" height="14" viewBox="0 0 14 14"><rect x="0.4" y="0.4" width="13.2" height="13.2" rx="1" fill="#e03a2f"/><path d="M4.6 11.6V3H7.6Q10.6 3.2 10.6 5.6Q10.6 8 7.6 8.2H6" fill="none" stroke="#fff" stroke-width="1.3"/><circle cx="7.6" cy="5.6" r="1" fill="#fff"/></svg>
<svg style="position:absolute;left:662px;top:699.5px;" width="13" height="15" viewBox="0 0 13 15"><path d="M0.6 0.6H9L12.4 4V14.4H0.6Z" fill="#fdfdfd"/><path d="M9 0.6L12.4 4H9Z" fill="#3f8fd0"/><path d="M2.6 6H10.4M2.6 8H10.4M2.6 10H7M2.6 12H10.4" stroke="#2b78c2" stroke-width=".9"/></svg>
<svg style="position:absolute;left:693.5px;top:700.5px;" width="16" height="12" viewBox="0 0 16 12"><rect x="0.5" y="0.5" width="15" height="11" fill="#ffffff"/><rect x="0.5" y="0.5" width="15" height="1.8" fill="#3f8fd0"/></svg>
<div style="left:100.7px;top:718.2px;width:26.6px;height:1.8px;background:#9fd0f0;"></div>
<div style="left:132.7px;top:718.2px;width:26.6px;height:1.8px;background:#9fd0f0;"></div>
<div style="left:165.7px;top:718.2px;width:26.6px;height:1.8px;background:#9fd0f0;"></div>
<div style="left:198.7px;top:718.2px;width:26.6px;height:1.8px;background:#9fd0f0;"></div>
<div style="left:231.7px;top:718.2px;width:26.6px;height:1.8px;background:#9fd0f0;"></div>
<div style="left:263.7px;top:718.2px;width:26.6px;height:1.8px;background:#9fd0f0;"></div>
<div style="left:296.7px;top:718.2px;width:26.6px;height:1.8px;background:#9fd0f0;"></div>
<div style="left:328.7px;top:718.2px;width:26.6px;height:1.8px;background:#9fd0f0;"></div>
<div style="left:394.2px;top:718.2px;width:26.6px;height:1.8px;background:#9fd0f0;"></div>
<div style="left:426.7px;top:718.2px;width:26.6px;height:1.8px;background:#9fd0f0;"></div>
<div style="left:459.7px;top:718.2px;width:26.6px;height:1.8px;background:#9fd0f0;"></div>
<div style="left:492.7px;top:718.2px;width:26.6px;height:1.8px;background:#9fd0f0;"></div>
<div style="left:525.7px;top:718.2px;width:26.6px;height:1.8px;background:#9fd0f0;"></div>
<div style="left:558.2px;top:718.2px;width:26.6px;height:1.8px;background:#9fd0f0;"></div>
<div style="left:590.7px;top:718.2px;width:26.6px;height:1.8px;background:#9fd0f0;"></div>
<div style="left:622.7px;top:718.2px;width:26.6px;height:1.8px;background:#9fd0f0;"></div>
<div style="left:655.2px;top:718.2px;width:26.6px;height:1.8px;background:#9fd0f0;"></div>
<div style="left:687.7px;top:718.2px;width:26.6px;height:1.8px;background:#9fd0f0;"></div>
<svg style="position:absolute;left:1215.5px;top:701px;" width="13" height="11" viewBox="0 0 13 11"><path d="M2 9.6Q0.6 7.4 3 6.4Q5.6 6 5 8.4Q4 10.4 2 9.6ZM5 7.4Q8 4 8 1.8Q6.6 0.6 6.4 3Q6.6 7 8.4 6.6Q10.6 5.4 11.6 3.4Q12.4 5.6 10.4 6.8" fill="none" stroke="#fff" stroke-width=".95"/></svg>
<div class="t" style="left:1247.5px;top:694.30px;line-height:12px;height:12px;font-size:8.59px;color:#ffffff;">16:24</div>
<div class="t" style="left:1237px;top:706.70px;line-height:11px;height:11px;font-size:7.69px;color:#ffffff;">20/05/2020</div>
</div></body></html>
